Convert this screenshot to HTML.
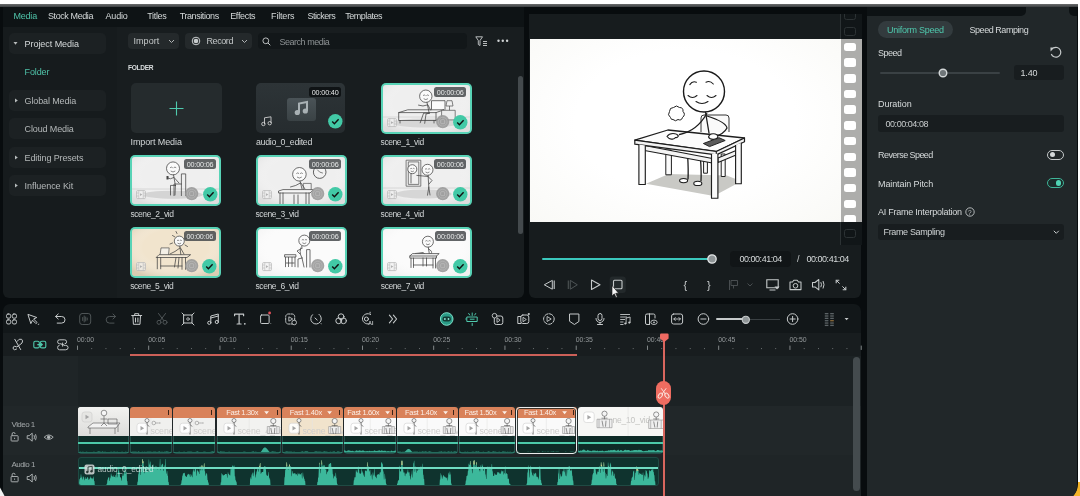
<!DOCTYPE html>
<html><head><meta charset="utf-8">
<style>
*{box-sizing:border-box;margin:0;padding:0}
body{width:1080px;height:496px;overflow:hidden;background:#fff;position:relative;font-family:"Liberation Sans",sans-serif;color:#d8dcdd}
.a{position:absolute}
.t{position:absolute;white-space:nowrap;font-size:9px;letter-spacing:-0.2px;line-height:10px}
svg{position:absolute;overflow:visible}
</style></head><body>

<div style="position:absolute;left:0;top:0;width:1080px;height:496px;will-change:transform;background:#fff;overflow:hidden">
<div class="a" style="left:1058px;top:482px;width:22px;height:14px;background:#f4b42a"></div>
<div class="a" style="left:0;top:3.7px;width:1078px;height:497.3px;background:#080c0e;border-radius:0 0 17px 0"></div>
<div class="a" style="left:0;top:3.7px;width:1078px;height:3.3px;background:linear-gradient(180deg,#6b6d6e,#3c3f41)"></div>
<div class="a" style="left:3px;top:7px;width:521px;height:19.7px;background:#0e1315"></div>
<div class="t" style="left:13.5px;top:11px;font-size:9px;letter-spacing:-0.22px;color:#4fc3a9;">Media</div>
<div class="t" style="left:48.0px;top:11px;font-size:9px;letter-spacing:-0.41px;color:#d4d8d9;">Stock Media</div>
<div class="t" style="left:105.5px;top:11px;font-size:9px;letter-spacing:-0.17px;color:#d4d8d9;">Audio</div>
<div class="t" style="left:147.3px;top:11px;font-size:9px;letter-spacing:-0.36px;color:#d4d8d9;">Titles</div>
<div class="t" style="left:179.7px;top:11px;font-size:9px;letter-spacing:-0.42px;color:#d4d8d9;">Transitions</div>
<div class="t" style="left:230.2px;top:11px;font-size:9px;letter-spacing:-0.32px;color:#d4d8d9;">Effects</div>
<div class="t" style="left:271.1px;top:11px;font-size:9px;letter-spacing:-0.18px;color:#d4d8d9;">Filters</div>
<div class="t" style="left:307.5px;top:11px;font-size:9px;letter-spacing:-0.55px;color:#d4d8d9;">Stickers</div>
<div class="t" style="left:345.2px;top:11px;font-size:9px;letter-spacing:-0.46px;color:#d4d8d9;">Templates</div>
<div class="a" style="left:3px;top:26.7px;width:114px;height:271.3px;background:#161b1d;border-radius:0 0 0 6px"></div>
<div class="a" style="left:9px;top:33px;width:97px;height:21px;background:#1c2123;border-radius:5px"></div>
<div class="a" style="left:9px;top:90px;width:97px;height:21px;background:#1c2123;border-radius:5px"></div>
<div class="a" style="left:9px;top:118px;width:97px;height:21px;background:#1c2123;border-radius:5px"></div>
<div class="a" style="left:9px;top:147px;width:97px;height:21px;background:#1c2123;border-radius:5px"></div>
<div class="a" style="left:9px;top:175px;width:97px;height:21px;background:#1c2123;border-radius:5px"></div>
<svg style="left:13px;top:41px" width="5" height="5"><path d="M0.5 1 L4.5 1 L2.5 3.8Z" fill="#b8bcbd"/></svg>
<svg style="left:14px;top:98px" width="5" height="5"><path d="M1 0.5 L1 4.5 L3.8 2.5Z" fill="#b8bcbd"/></svg>
<svg style="left:14px;top:155px" width="5" height="5"><path d="M1 0.5 L1 4.5 L3.8 2.5Z" fill="#b8bcbd"/></svg>
<svg style="left:14px;top:183px" width="5" height="5"><path d="M1 0.5 L1 4.5 L3.8 2.5Z" fill="#b8bcbd"/></svg>
<div class="t" style="left:24.6px;top:38.5px;font-size:9px;letter-spacing:-0.06px;color:#d6dadb;">Project Media</div>
<div class="t" style="left:24.6px;top:67px;font-size:9px;letter-spacing:-0.14px;color:#4fc3a9;">Folder</div>
<div class="t" style="left:24.6px;top:95.5px;font-size:9px;letter-spacing:-0.13px;color:#b4b8b9;">Global Media</div>
<div class="t" style="left:24.6px;top:124px;font-size:9px;letter-spacing:-0.13px;color:#b4b8b9;">Cloud Media</div>
<div class="t" style="left:24.6px;top:152.5px;font-size:9px;letter-spacing:-0.12px;color:#b4b8b9;">Editing Presets</div>
<div class="t" style="left:24.6px;top:181px;font-size:9px;letter-spacing:-0.07px;color:#b4b8b9;">Influence Kit</div>
<div class="a" style="left:117px;top:26.7px;width:407px;height:271.3px;background:#181d1f;border-radius:0 0 6px 0"></div>
<div class="a" style="left:128px;top:33px;width:51px;height:16px;background:#24292b;border-radius:4px"></div>
<div class="t" style="left:133.5px;top:36px;font-size:9px;letter-spacing:0.05px;color:#c4c8c9;">Import</div>
<svg style="left:167.5px;top:39px" width="8" height="5"><path d="M1 1 L3.5 3.5 L6 1" fill="none" stroke="#b0b4b5" stroke-width="1"/></svg>
<div class="a" style="left:185px;top:33px;width:67px;height:16px;background:#24292b;border-radius:4px"></div>
<svg style="left:191px;top:36px" width="10" height="10"><circle cx="5" cy="5" r="3.8" fill="none" stroke="#c8cccd" stroke-width="1"/><circle cx="5" cy="5" r="2.3" fill="#c8cccd"/></svg>
<div class="t" style="left:206.5px;top:36px;font-size:9px;letter-spacing:-0.42px;color:#c4c8c9;">Record</div>
<svg style="left:240.5px;top:39px" width="8" height="5"><path d="M1 1 L3.5 3.5 L6 1" fill="none" stroke="#b0b4b5" stroke-width="1"/></svg>
<div class="a" style="left:258px;top:33px;width:209px;height:16px;background:#121719;border-radius:4px"></div>
<svg style="left:262px;top:37px" width="9" height="9"><circle cx="3.8" cy="3.8" r="2.9" fill="none" stroke="#c8cccd" stroke-width="0.9"/><path d="M6 6 L8.3 8.3" stroke="#c8cccd" stroke-width="1"/></svg>
<div class="t" style="left:279.5px;top:36.5px;font-size:9px;letter-spacing:-0.48px;color:#8d9294;">Search media</div>
<svg style="left:475px;top:36px" width="14" height="11"><path d="M0.8 0.8 H7.5 L5 4.5 V9.5 L3.3 8.5 V4.5Z" fill="none" stroke="#c8cccd" stroke-width="0.9"/><path d="M8 5.5 H12 M8 7.5 H12 M8 9.5 H12" stroke="#c8cccd" stroke-width="0.9"/></svg>
<svg style="left:497px;top:39px" width="12" height="4"><circle cx="1.5" cy="1.8" r="1.2" fill="#d0d4d5"/><circle cx="5.8" cy="1.8" r="1.2" fill="#d0d4d5"/><circle cx="10.1" cy="1.8" r="1.2" fill="#d0d4d5"/></svg>
<div class="t" style="left:128px;top:62.5px;font-size:6.6px;letter-spacing:-0.3px;color:#d8dcdd;font-weight:bold">FOLDER</div>
<div class="a" style="left:517.5px;top:76px;width:5px;height:157.5px;background:#444a4d;border-radius:3px"></div>
<div class="a" style="left:529px;top:14px;width:332px;height:284px;background:#171c1e;border-radius:0 0 6px 6px"></div>
<div class="a" style="left:867px;top:7px;width:209.5px;height:494px;background:#212729;border-radius:0 0 15px 0"></div>
<div class="a" style="left:130.5px;top:82.6px;width:91px;height:50.5px;background:#252b2d;border-radius:5px"></div>
<svg style="left:168.5px;top:100.5px" width="15" height="15"><path d="M7.5 0.5 V14.5 M0.5 7.5 H14.5" stroke="#4fcaae" stroke-width="1.1"/></svg>
<div class="t" style="left:130.5px;top:136.5px;font-size:9px;letter-spacing:-0.1px;color:#d2d6d7">Import Media</div>
<div class="a" style="left:256px;top:83px;width:89px;height:50px;background:linear-gradient(180deg,#2d3437,#262c2f);border-radius:5px;overflow:hidden"><div class="a" style="left:31px;top:14.5px;width:28.5px;height:23px;background:linear-gradient(180deg,#4a5357,#3a4245);border-radius:3px"></div><svg style="left:37px;top:17px" width="17" height="17"><path d="M6 12.5 V3.5 L14 2 V11" fill="none" stroke="#a9b1b4" stroke-width="2"/><circle cx="4.3" cy="12.5" r="2.6" fill="#a9b1b4"/><circle cx="12.3" cy="11" r="2.6" fill="#a9b1b4"/></svg><svg style="left:4.5px;top:33px" width="12" height="10"><path d="M3.5 8 V1.8 L10 0.8 V7" fill="none" stroke="#e0e0e0" stroke-width="0.8"/><circle cx="2.4" cy="8" r="1.7" fill="none" stroke="#e0e0e0" stroke-width="0.8"/><circle cx="8.7" cy="7.2" r="1.7" fill="none" stroke="#e0e0e0" stroke-width="0.8"/></svg><svg style="left:71.5px;top:31.3px" width="15" height="15"><circle cx="7.3" cy="7.3" r="7.2" fill="#42c9a6"/><path d="M4.2 7.6 L6.4 9.8 L10.6 5.2" fill="none" stroke="#111" stroke-width="1.4"/></svg><div class="a" style="left:53.3px;top:4px;width:31.7px;height:9.5px;background:#0f1315;border-radius:2.5px"></div><div class="t" style="left:53.3px;top:4.5px;width:31.7px;text-align:center;font-size:7.2px;letter-spacing:-0.15px;line-height:9px;color:#e8eaea">00:00:40</div></div>
<div class="t" style="left:256px;top:136.5px;font-size:8.8px;letter-spacing:-0.3px;color:#d2d6d7">audio_0_edited</div>
<div class="a" style="left:380.6px;top:82.6px;width:91px;height:51px;border-radius:5px;background:#58d3b6;overflow:hidden"><div class="a" style="left:2px;top:2px;width:87px;height:47px;border-radius:3px;background:#efefef;overflow:hidden"><svg style="left:-2px;top:-2px" width="91" height="51" viewBox="0 0 91 51"><defs><radialGradient id="vg" cx="50%" cy="40%" r="65%"><stop offset="55%" stop-color="#fff" stop-opacity="0"/><stop offset="100%" stop-color="#cfcfcf" stop-opacity="0.55"/></radialGradient></defs><rect x="0" y="0" width="91" height="51" fill="url(#vg)"/><path d="M0 34 H91" stroke="#d8d8d8" stroke-width="1"/><ellipse cx="45" cy="40" rx="34" ry="4.5" fill="#d6d6d6"/><path d="M50.5 26.8 V17.7 H64 V26.8" fill="#fafafa" stroke="#404040" stroke-width="0.75"/><path d="M17.7 29.6 L26.8 26.8 H62.9 L55 29.6 Z" fill="#f4f4f4" stroke="#404040" stroke-width="0.75"/><path d="M17.7 29.6 V37.5 H55 V29.6 M55 37.5 L62.9 33 V26.8" fill="none" stroke="#404040" stroke-width="0.75" stroke-linecap="round" stroke-linejoin="round"/><path d="M19 37.5 V40 M53 37.5 V40" fill="none" stroke="#404040" stroke-width="0.75" stroke-linecap="round" stroke-linejoin="round"/><path d="M60.6 27.3 H74.2 V36.9 H60.6z" fill="#ececec" stroke="#505050" stroke-width="0.7"/><path d="M66 17.7 H71 L72 23 H65z M68.5 23 V27.3" fill="#f0f0f0" stroke="#505050" stroke-width="0.7"/><circle cx="44.8" cy="13.2" r="6.2" fill="#fafafa" stroke="#404040" stroke-width="0.75"/><path d="M42.01 12.579999999999998 q1.2400000000000002 -1.2400000000000002 2.4800000000000004 0 M45.419999999999995 12.579999999999998 q1.2400000000000002 -1.2400000000000002 2.4800000000000004 0 M42.629999999999995 15.68 q2.17 1.8599999999999999 4.34 0" fill="none" stroke="#404040" stroke-width="0.6"/><path d="M46 19.4 L48.2 30.2 M46.5 22 Q42 24 37.5 22.2 M47 22 L49.5 27" fill="none" stroke="#404040" stroke-width="0.75" stroke-linecap="round" stroke-linejoin="round"/><path d="M48.2 30.2 L42.6 30.2 L39.2 39.8 M48.2 30.2 L45 31 L43.7 40.3" fill="none" stroke="#404040" stroke-width="0.75" stroke-linecap="round" stroke-linejoin="round"/></svg></div><svg style="left:6px;top:35px" width="10" height="9"><rect x="0.6" y="0.6" width="8.8" height="8" rx="1" fill="#f2f2f2" fill-opacity="0.6" stroke="#b9b9b9" stroke-width="0.8"/><path d="M2.8 0.6 V8.6 M7.2 0.6 V8.6 M0.6 3 H2.8 M0.6 6 H2.8 M7.2 3 H9.4 M7.2 6 H9.4" stroke="#b9b9b9" stroke-width="0.6"/><path d="M4 3.2 L6.3 4.6 L4 6z" fill="#b0b0b0"/></svg><svg style="left:55px;top:32.5px" width="14" height="14"><circle cx="6.7" cy="6.7" r="6.6" fill="#9a9a9a" fill-opacity="0.9"/><circle cx="6.7" cy="6.7" r="4.4" fill="none" stroke="#b8b8b8" stroke-width="0.7"/><rect x="4.7" y="4.7" width="4" height="4" rx="0.8" fill="none" stroke="#c0c0c0" stroke-width="0.7"/></svg><svg style="left:72.3px;top:32px" width="15" height="15"><circle cx="7.3" cy="7.3" r="7.2" fill="#42c9a6"/><path d="M4.2 7.6 L6.4 9.8 L10.6 5.2" fill="none" stroke="#111" stroke-width="1.4"/></svg><div class="a" style="left:53.8px;top:4.6px;width:31.7px;height:9.5px;background:rgba(70,74,76,0.85);border-radius:2.5px"></div><div class="t" style="left:53.8px;top:5.1px;width:31.7px;text-align:center;font-size:7.2px;letter-spacing:-0.15px;line-height:9px;color:#e8eaea">00:00:06</div></div><div class="t" style="left:380.6px;top:136.6px;font-size:8.5px;letter-spacing:-0.42px;color:#d2d6d7">scene_1_vid</div>
<div class="a" style="left:130.4px;top:154.7px;width:91px;height:51px;border-radius:5px;background:#58d3b6;overflow:hidden"><div class="a" style="left:2px;top:2px;width:87px;height:47px;border-radius:3px;background:#efefef;overflow:hidden"><svg style="left:-2px;top:-2px" width="91" height="51" viewBox="0 0 91 51"><defs><radialGradient id="vg" cx="50%" cy="40%" r="65%"><stop offset="55%" stop-color="#fff" stop-opacity="0"/><stop offset="100%" stop-color="#cfcfcf" stop-opacity="0.55"/></radialGradient></defs><rect x="0" y="0" width="91" height="51" fill="url(#vg)"/><path d="M0 34 H91" stroke="#d6d6d6" stroke-width="1"/><ellipse cx="43" cy="39.7" rx="30" ry="4" fill="#d4d4d4"/><path d="M51.4 40.6 V18.9 H55.7 V40.6 M51.4 29 H44 V40.6" fill="none" stroke="#404040" stroke-width="0.75" stroke-linecap="round" stroke-linejoin="round"/><circle cx="43" cy="13.4" r="6.5" fill="#fafafa" stroke="#404040" stroke-width="0.75"/><path d="M40.075 12.75 q1.3 -1.3 2.6 0 M43.65 12.75 q1.3 -1.3 2.6 0 M40.725 16.0 q2.275 1.95 4.55 0" fill="none" stroke="#404040" stroke-width="0.6"/><path d="M43.5 19.9 L45.4 30.4 M44 22.5 Q40 25 37.5 23.1 M44.5 23 L49 28" fill="none" stroke="#404040" stroke-width="0.75" stroke-linecap="round" stroke-linejoin="round"/><path d="M36.5 21 h2 v3.5 h-2z" fill="#444"/><path d="M45.4 30.4 L40.5 30.4 V40 M45.4 30.4 L45 40" fill="none" stroke="#404040" stroke-width="0.75" stroke-linecap="round" stroke-linejoin="round"/></svg></div><svg style="left:6px;top:35px" width="10" height="9"><rect x="0.6" y="0.6" width="8.8" height="8" rx="1" fill="#f2f2f2" fill-opacity="0.6" stroke="#b9b9b9" stroke-width="0.8"/><path d="M2.8 0.6 V8.6 M7.2 0.6 V8.6 M0.6 3 H2.8 M0.6 6 H2.8 M7.2 3 H9.4 M7.2 6 H9.4" stroke="#b9b9b9" stroke-width="0.6"/><path d="M4 3.2 L6.3 4.6 L4 6z" fill="#b0b0b0"/></svg><svg style="left:55px;top:32.5px" width="14" height="14"><circle cx="6.7" cy="6.7" r="6.6" fill="#9a9a9a" fill-opacity="0.9"/><circle cx="6.7" cy="6.7" r="4.4" fill="none" stroke="#b8b8b8" stroke-width="0.7"/><rect x="4.7" y="4.7" width="4" height="4" rx="0.8" fill="none" stroke="#c0c0c0" stroke-width="0.7"/></svg><svg style="left:72.3px;top:32px" width="15" height="15"><circle cx="7.3" cy="7.3" r="7.2" fill="#42c9a6"/><path d="M4.2 7.6 L6.4 9.8 L10.6 5.2" fill="none" stroke="#111" stroke-width="1.4"/></svg><div class="a" style="left:53.8px;top:4.6px;width:31.7px;height:9.5px;background:rgba(70,74,76,0.85);border-radius:2.5px"></div><div class="t" style="left:53.8px;top:5.1px;width:31.7px;text-align:center;font-size:7.2px;letter-spacing:-0.15px;line-height:9px;color:#e8eaea">00:00:06</div></div><div class="t" style="left:130.4px;top:208.7px;font-size:8.5px;letter-spacing:-0.42px;color:#d2d6d7">scene_2_vid</div>
<div class="a" style="left:255.5px;top:154.7px;width:91px;height:51px;border-radius:5px;background:#58d3b6;overflow:hidden"><div class="a" style="left:2px;top:2px;width:87px;height:47px;border-radius:3px;background:#efefef;overflow:hidden"><svg style="left:-2px;top:-2px" width="91" height="51" viewBox="0 0 91 51"><defs><radialGradient id="vg" cx="50%" cy="40%" r="65%"><stop offset="55%" stop-color="#fff" stop-opacity="0"/><stop offset="100%" stop-color="#cfcfcf" stop-opacity="0.55"/></radialGradient></defs><rect x="0" y="0" width="91" height="51" fill="url(#vg)"/><circle cx="63.7" cy="17.1" r="6.3" fill="#f2f2f2" stroke="#505050" stroke-width="0.9"/><path d="M63.7 17.1 l-2.5 -2.5 M63.7 17.1 l3.2 1" stroke="#505050" stroke-width="0.7"/><path d="M47.3 35 V28.4 H55.2 V35" fill="#f0f0f0" stroke="#505050" stroke-width="0.7"/><circle cx="43.4" cy="19.3" r="6.8" fill="#fafafa" stroke="#404040" stroke-width="0.75"/><path d="M40.339999999999996 18.62 q1.36 -1.36 2.72 0 M44.08 18.62 q1.36 -1.36 2.72 0 M41.019999999999996 22.02 q2.38 2.04 4.76 0" fill="none" stroke="#404040" stroke-width="0.6"/><path d="M44 26 L46 34 M44.5 28 Q40 31 34.5 32 M45 28 L49 34" fill="none" stroke="#404040" stroke-width="0.75" stroke-linecap="round" stroke-linejoin="round"/><path d="M22.5 36 L27 34.6 H57.5 L54 38 H22.5z" fill="#f6f6f6" stroke="#404040" stroke-width="0.75"/><path d="M24 38 V51 M27 38 V51 M50 38 V51 M53 38 V51 M38 40 V51 M42 40 V51" fill="none" stroke="#404040" stroke-width="0.75" stroke-linecap="round" stroke-linejoin="round"/></svg></div><svg style="left:6px;top:35px" width="10" height="9"><rect x="0.6" y="0.6" width="8.8" height="8" rx="1" fill="#f2f2f2" fill-opacity="0.6" stroke="#b9b9b9" stroke-width="0.8"/><path d="M2.8 0.6 V8.6 M7.2 0.6 V8.6 M0.6 3 H2.8 M0.6 6 H2.8 M7.2 3 H9.4 M7.2 6 H9.4" stroke="#b9b9b9" stroke-width="0.6"/><path d="M4 3.2 L6.3 4.6 L4 6z" fill="#b0b0b0"/></svg><svg style="left:55px;top:32.5px" width="14" height="14"><circle cx="6.7" cy="6.7" r="6.6" fill="#9a9a9a" fill-opacity="0.9"/><circle cx="6.7" cy="6.7" r="4.4" fill="none" stroke="#b8b8b8" stroke-width="0.7"/><rect x="4.7" y="4.7" width="4" height="4" rx="0.8" fill="none" stroke="#c0c0c0" stroke-width="0.7"/></svg><svg style="left:72.3px;top:32px" width="15" height="15"><circle cx="7.3" cy="7.3" r="7.2" fill="#42c9a6"/><path d="M4.2 7.6 L6.4 9.8 L10.6 5.2" fill="none" stroke="#111" stroke-width="1.4"/></svg><div class="a" style="left:53.8px;top:4.6px;width:31.7px;height:9.5px;background:rgba(70,74,76,0.85);border-radius:2.5px"></div><div class="t" style="left:53.8px;top:5.1px;width:31.7px;text-align:center;font-size:7.2px;letter-spacing:-0.15px;line-height:9px;color:#e8eaea">00:00:06</div></div><div class="t" style="left:255.5px;top:208.7px;font-size:8.5px;letter-spacing:-0.42px;color:#d2d6d7">scene_3_vid</div>
<div class="a" style="left:380.6px;top:154.7px;width:91px;height:51px;border-radius:5px;background:#58d3b6;overflow:hidden"><div class="a" style="left:2px;top:2px;width:87px;height:47px;border-radius:3px;background:#efefef;overflow:hidden"><svg style="left:-2px;top:-2px" width="91" height="51" viewBox="0 0 91 51"><defs><radialGradient id="vg" cx="50%" cy="40%" r="65%"><stop offset="55%" stop-color="#fff" stop-opacity="0"/><stop offset="100%" stop-color="#cfcfcf" stop-opacity="0.55"/></radialGradient></defs><rect x="0" y="0" width="91" height="51" fill="url(#vg)"/><path d="M0 33 H91" stroke="#d6d6d6" stroke-width="1"/><ellipse cx="42.6" cy="39" rx="28" ry="4.5" fill="#d6d6d6"/><path d="M25.1 5.2 H39.8 V31.2 H25.1z M27.3 6.9 H37.8 V29.4 H27.3z" fill="#f0f0f0" stroke="#555" stroke-width="0.75"/><circle cx="31.3" cy="14.2" r="4.5" fill="#fafafa" stroke="#404040" stroke-width="0.75"/><path d="M29.275000000000002 13.75 q0.9 -0.9 1.8 0 M31.75 13.75 q0.9 -0.9 1.8 0 M29.725 16.0 q1.575 1.3499999999999999 3.15 0" fill="none" stroke="#404040" stroke-width="0.6"/><path d="M30 18.7 V28" fill="none" stroke="#404040" stroke-width="0.75" stroke-linecap="round" stroke-linejoin="round"/><circle cx="46.5" cy="14.8" r="5.5" fill="#fafafa" stroke="#404040" stroke-width="0.75"/><path d="M44.025 14.25 q1.1 -1.1 2.2 0 M47.05 14.25 q1.1 -1.1 2.2 0 M44.575 17.0 q1.9249999999999998 1.65 3.8499999999999996 0" fill="none" stroke="#404040" stroke-width="0.6"/><path d="M47.1 20.3 L47.8 32 L46.5 40.2 M47.8 32 L49 40 M47.1 21.5 L35.8 20.4 M47.5 22 L51 25.5 L48 29" fill="none" stroke="#404040" stroke-width="0.75" stroke-linecap="round" stroke-linejoin="round"/></svg></div><svg style="left:6px;top:35px" width="10" height="9"><rect x="0.6" y="0.6" width="8.8" height="8" rx="1" fill="#f2f2f2" fill-opacity="0.6" stroke="#b9b9b9" stroke-width="0.8"/><path d="M2.8 0.6 V8.6 M7.2 0.6 V8.6 M0.6 3 H2.8 M0.6 6 H2.8 M7.2 3 H9.4 M7.2 6 H9.4" stroke="#b9b9b9" stroke-width="0.6"/><path d="M4 3.2 L6.3 4.6 L4 6z" fill="#b0b0b0"/></svg><svg style="left:55px;top:32.5px" width="14" height="14"><circle cx="6.7" cy="6.7" r="6.6" fill="#9a9a9a" fill-opacity="0.9"/><circle cx="6.7" cy="6.7" r="4.4" fill="none" stroke="#b8b8b8" stroke-width="0.7"/><rect x="4.7" y="4.7" width="4" height="4" rx="0.8" fill="none" stroke="#c0c0c0" stroke-width="0.7"/></svg><svg style="left:72.3px;top:32px" width="15" height="15"><circle cx="7.3" cy="7.3" r="7.2" fill="#42c9a6"/><path d="M4.2 7.6 L6.4 9.8 L10.6 5.2" fill="none" stroke="#111" stroke-width="1.4"/></svg><div class="a" style="left:53.8px;top:4.6px;width:31.7px;height:9.5px;background:rgba(70,74,76,0.85);border-radius:2.5px"></div><div class="t" style="left:53.8px;top:5.1px;width:31.7px;text-align:center;font-size:7.2px;letter-spacing:-0.15px;line-height:9px;color:#e8eaea">00:00:06</div></div><div class="t" style="left:380.6px;top:208.7px;font-size:8.5px;letter-spacing:-0.42px;color:#d2d6d7">scene_4_vid</div>
<div class="a" style="left:130.2px;top:226.8px;width:91px;height:51px;border-radius:5px;background:#58d3b6;overflow:hidden"><div class="a" style="left:2px;top:2px;width:87px;height:47px;border-radius:3px;background:#f1e4cd;overflow:hidden"><svg style="left:-2px;top:-2px" width="91" height="51" viewBox="0 0 91 51"><defs><radialGradient id="vg5" cx="50%" cy="40%" r="65%"><stop offset="55%" stop-color="#fff" stop-opacity="0"/><stop offset="100%" stop-color="#c9b99c" stop-opacity="0.55"/></radialGradient></defs><rect x="0" y="0" width="91" height="51" fill="url(#vg5)"/><path d="M45 10 l-2.5 -1.5 M47 6.5 l-1 -2 M42.5 16 l-2.5 1 M55 12 l2.5 -1 M55 18 l2.5 1.5" fill="none" stroke="#404040" stroke-width="0.75" stroke-linecap="round" stroke-linejoin="round"/><path d="M30.1 27.7 L31 20.9 H39.2 L38.5 27.7" fill="#f3efe6" stroke="#505050" stroke-width="0.7"/><circle cx="49.3" cy="14.1" r="5" fill="#fafafa" stroke="#404040" stroke-width="0.75"/><path d="M47.05 13.6 q1.0 -1.0 2.0 0 M49.8 13.6 q1.0 -1.0 2.0 0 M47.55 16.1 q1.75 1.5 3.5 0" fill="none" stroke="#404040" stroke-width="0.6"/><path d="M49.8 19.1 L51 29 M50 21 Q45 25 40 27 M50.5 21 L54 27" fill="none" stroke="#404040" stroke-width="0.75" stroke-linecap="round" stroke-linejoin="round"/><path d="M26.2 30.5 L29 27.7 H60.6 L57 30.5z" fill="#f6ecda" stroke="#404040" stroke-width="0.75"/><path d="M27.3 30.5 V41.8 M30.7 30.5 V41.8 M52 30.5 V42.3 M55.5 30.5 V42.3 M30.7 39 H52 M46 30.5 L44.5 40 M49 30.5 L48 41" fill="none" stroke="#404040" stroke-width="0.75" stroke-linecap="round" stroke-linejoin="round"/></svg></div><svg style="left:6px;top:35px" width="10" height="9"><rect x="0.6" y="0.6" width="8.8" height="8" rx="1" fill="#f2f2f2" fill-opacity="0.6" stroke="#b9b9b9" stroke-width="0.8"/><path d="M2.8 0.6 V8.6 M7.2 0.6 V8.6 M0.6 3 H2.8 M0.6 6 H2.8 M7.2 3 H9.4 M7.2 6 H9.4" stroke="#b9b9b9" stroke-width="0.6"/><path d="M4 3.2 L6.3 4.6 L4 6z" fill="#b0b0b0"/></svg><svg style="left:55px;top:32.5px" width="14" height="14"><circle cx="6.7" cy="6.7" r="6.6" fill="#9a9a9a" fill-opacity="0.9"/><circle cx="6.7" cy="6.7" r="4.4" fill="none" stroke="#b8b8b8" stroke-width="0.7"/><rect x="4.7" y="4.7" width="4" height="4" rx="0.8" fill="none" stroke="#c0c0c0" stroke-width="0.7"/></svg><svg style="left:72.3px;top:32px" width="15" height="15"><circle cx="7.3" cy="7.3" r="7.2" fill="#42c9a6"/><path d="M4.2 7.6 L6.4 9.8 L10.6 5.2" fill="none" stroke="#111" stroke-width="1.4"/></svg><div class="a" style="left:53.8px;top:4.6px;width:31.7px;height:9.5px;background:rgba(70,74,76,0.85);border-radius:2.5px"></div><div class="t" style="left:53.8px;top:5.1px;width:31.7px;text-align:center;font-size:7.2px;letter-spacing:-0.15px;line-height:9px;color:#e8eaea">00:00:06</div></div><div class="t" style="left:130.2px;top:280.8px;font-size:8.5px;letter-spacing:-0.42px;color:#d2d6d7">scene_5_vid</div>
<div class="a" style="left:255.5px;top:226.8px;width:91px;height:51px;border-radius:5px;background:#58d3b6;overflow:hidden"><div class="a" style="left:2px;top:2px;width:87px;height:47px;border-radius:3px;background:#fbfbfb;overflow:hidden"><svg style="left:-2px;top:-2px" width="91" height="51" viewBox="0 0 91 51"><defs><radialGradient id="vg6" cx="50%" cy="40%" r="65%"><stop offset="55%" stop-color="#fff" stop-opacity="0"/><stop offset="100%" stop-color="#cfcfcf" stop-opacity="0.25"/></radialGradient></defs><rect x="0" y="0" width="91" height="51" fill="url(#vg6)"/><path d="M50.6 40.1 V22.6 H54 V40.1" fill="none" stroke="#404040" stroke-width="0.75" stroke-linecap="round" stroke-linejoin="round"/><path d="M28.6 27.7 H39.9 V30 H28.6z M29.5 30 V40.1 M39 30 V40.1 M30 36 H38.5 M32.5 30 V40 M36 30 V40" fill="#f6f6f6" stroke="#404040" stroke-width="0.75"/><circle cx="48.3" cy="13.6" r="5.5" fill="#fafafa" stroke="#404040" stroke-width="0.75"/><path d="M45.824999999999996 13.049999999999999 q1.1 -1.1 2.2 0 M48.849999999999994 13.049999999999999 q1.1 -1.1 2.2 0 M46.375 15.8 q1.9249999999999998 1.65 3.8499999999999996 0" fill="none" stroke="#404040" stroke-width="0.6"/><path d="M46 19 Q42 24 46 31 M46.5 21 L41 24 L44 27 M46 31 L42 32 L42 40 M46 31 L48 40" fill="none" stroke="#404040" stroke-width="0.75" stroke-linecap="round" stroke-linejoin="round"/></svg></div><svg style="left:6px;top:35px" width="10" height="9"><rect x="0.6" y="0.6" width="8.8" height="8" rx="1" fill="#f2f2f2" fill-opacity="0.6" stroke="#b9b9b9" stroke-width="0.8"/><path d="M2.8 0.6 V8.6 M7.2 0.6 V8.6 M0.6 3 H2.8 M0.6 6 H2.8 M7.2 3 H9.4 M7.2 6 H9.4" stroke="#b9b9b9" stroke-width="0.6"/><path d="M4 3.2 L6.3 4.6 L4 6z" fill="#b0b0b0"/></svg><svg style="left:55px;top:32.5px" width="14" height="14"><circle cx="6.7" cy="6.7" r="6.6" fill="#9a9a9a" fill-opacity="0.9"/><circle cx="6.7" cy="6.7" r="4.4" fill="none" stroke="#b8b8b8" stroke-width="0.7"/><rect x="4.7" y="4.7" width="4" height="4" rx="0.8" fill="none" stroke="#c0c0c0" stroke-width="0.7"/></svg><svg style="left:72.3px;top:32px" width="15" height="15"><circle cx="7.3" cy="7.3" r="7.2" fill="#42c9a6"/><path d="M4.2 7.6 L6.4 9.8 L10.6 5.2" fill="none" stroke="#111" stroke-width="1.4"/></svg><div class="a" style="left:53.8px;top:4.6px;width:31.7px;height:9.5px;background:rgba(70,74,76,0.85);border-radius:2.5px"></div><div class="t" style="left:53.8px;top:5.1px;width:31.7px;text-align:center;font-size:7.2px;letter-spacing:-0.15px;line-height:9px;color:#e8eaea">00:00:06</div></div><div class="t" style="left:255.5px;top:280.8px;font-size:8.5px;letter-spacing:-0.42px;color:#d2d6d7">scene_6_vid</div>
<div class="a" style="left:380.8px;top:226.8px;width:91px;height:51px;border-radius:5px;background:#58d3b6;overflow:hidden"><div class="a" style="left:2px;top:2px;width:87px;height:47px;border-radius:3px;background:#fbfbfb;overflow:hidden"><svg style="left:-2px;top:-2px" width="91" height="51" viewBox="0 0 91 51"><defs><radialGradient id="vg7" cx="50%" cy="40%" r="65%"><stop offset="55%" stop-color="#fff" stop-opacity="0"/><stop offset="100%" stop-color="#cfcfcf" stop-opacity="0.25"/></radialGradient></defs><rect x="0" y="0" width="91" height="51" fill="url(#vg7)"/><circle cx="46.9" cy="14.7" r="5.5" fill="#fafafa" stroke="#404040" stroke-width="0.75"/><path d="M44.425 14.149999999999999 q1.1 -1.1 2.2 0 M47.449999999999996 14.149999999999999 q1.1 -1.1 2.2 0 M44.975 16.9 q1.9249999999999998 1.65 3.8499999999999996 0" fill="none" stroke="#404040" stroke-width="0.6"/><path d="M47.3 20.2 L48.5 28 M47.5 22 Q52 24 50 27 L45 27.5" fill="none" stroke="#404040" stroke-width="0.75" stroke-linecap="round" stroke-linejoin="round"/><path d="M34 26.5 L42 25.5 L44 27 L36 28z" fill="#888" stroke="#404040" stroke-width="0.6"/><path d="M28.8 29 L31.5 26.6 H58.2 L55.5 29z" fill="#f6f6f6" stroke="#404040" stroke-width="0.75"/><path d="M28.8 29 V31.1 H55.5 V29 M30 31.1 V40.5 M32.5 31.1 V40.5 M52 31.1 V41 M54.5 31.1 V41 M32.5 38 H52 M42 31 V39 M45.5 31 V39" fill="none" stroke="#404040" stroke-width="0.75" stroke-linecap="round" stroke-linejoin="round"/></svg></div><svg style="left:6px;top:35px" width="10" height="9"><rect x="0.6" y="0.6" width="8.8" height="8" rx="1" fill="#f2f2f2" fill-opacity="0.6" stroke="#b9b9b9" stroke-width="0.8"/><path d="M2.8 0.6 V8.6 M7.2 0.6 V8.6 M0.6 3 H2.8 M0.6 6 H2.8 M7.2 3 H9.4 M7.2 6 H9.4" stroke="#b9b9b9" stroke-width="0.6"/><path d="M4 3.2 L6.3 4.6 L4 6z" fill="#b0b0b0"/></svg><svg style="left:55px;top:32.5px" width="14" height="14"><circle cx="6.7" cy="6.7" r="6.6" fill="#9a9a9a" fill-opacity="0.9"/><circle cx="6.7" cy="6.7" r="4.4" fill="none" stroke="#b8b8b8" stroke-width="0.7"/><rect x="4.7" y="4.7" width="4" height="4" rx="0.8" fill="none" stroke="#c0c0c0" stroke-width="0.7"/></svg><svg style="left:72.3px;top:32px" width="15" height="15"><circle cx="7.3" cy="7.3" r="7.2" fill="#42c9a6"/><path d="M4.2 7.6 L6.4 9.8 L10.6 5.2" fill="none" stroke="#111" stroke-width="1.4"/></svg><div class="a" style="left:53.8px;top:4.6px;width:31.7px;height:9.5px;background:rgba(70,74,76,0.85);border-radius:2.5px"></div><div class="t" style="left:53.8px;top:5.1px;width:31.7px;text-align:center;font-size:7.2px;letter-spacing:-0.15px;line-height:9px;color:#e8eaea">00:00:06</div></div><div class="t" style="left:380.8px;top:280.8px;font-size:8.5px;letter-spacing:-0.42px;color:#d2d6d7">scene_7_vid</div>
<div class="a" style="left:529.5px;top:38.5px;width:311px;height:183.2px;background:radial-gradient(ellipse at 50% 45%,#ffffff 50%,#f9f9f6 100%)"></div>
<svg style="left:0;top:0" width="1080" height="496"><path d="M646 183.7 L668.7 174 L726.8 175.6 L741.3 181.3 L713.9 196 Z" fill="#c9c9c5"/><path d="M670.5 117.5 q-3.5 -2.5 -1 -6 q0 -4 4 -4 q3 -3 6 0 q4 0 3.5 4 q3 3 -0.5 6 q-1 3.5 -4.5 2 q-2.5 2.5 -5 0 q-2 0.5 -2.5 -2z" fill="#fff" stroke="#222" stroke-width="1"/><path d="M701 132 V118 q0 -3 3 -3 H726 q3 0 3 3 V132" fill="#fafafa" stroke="#333" stroke-width="1"/><path d="M665.8 150 h5.6 v24.8 h-5.6z M721.2 154 h4 v22.5 h-4z M703.6 158 h3.8 v15.2 h-3.8z" fill="#fbfbfb" stroke="#1e1e1e" stroke-width="1"/><path d="M687.7 157 Q688.5 170 688 179.5 M700.5 159 Q701.5 172 701 181.3" fill="none" stroke="#1e1e1e" stroke-width="1.3"/><ellipse cx="683.6" cy="180.6" rx="4" ry="2.1" fill="#fff" stroke="#1e1e1e" stroke-width="1.1"/><ellipse cx="697.8" cy="183.4" rx="4" ry="2.1" fill="#fff" stroke="#1e1e1e" stroke-width="1.1"/><path d="M644.5 145.5 L712.3 158.5 V163 L644.5 150.5 Z M718 158 L739.7 149 V153.5 L718 162.5 Z" fill="#f4f4f4" stroke="#1e1e1e" stroke-width="1.1" stroke-linejoin="round"/><path d="M634.8 140.2 L667.9 130 L744.5 138 L716.3 151.5 Z" fill="#fcfcfc" stroke="#1e1e1e" stroke-width="1.3" stroke-linejoin="round"/><path d="M634.8 140.2 V144.2 L716.3 154.9 L744.5 141.8 V138 L716.3 151.5 Z M716.3 151.5 V154.9" fill="#f3f3f3" stroke="#1e1e1e" stroke-width="1.2" stroke-linejoin="round"/><path d="M638.9 144.6 V184.5 h6.4 V145.5 M711.5 154 V198.2 h6.4 V153.8 M735.6 145 V183.7 h5.7 V142.8" fill="#fbfbfb" stroke="#1e1e1e" stroke-width="1.15" stroke-linejoin="round"/><path d="M705.5 112 L709 133" stroke="#1e1e1e" fill="none" stroke-width="1.3" stroke-linecap="round" stroke-linejoin="round"/><path d="M706.8 113.5 Q697 131 679.5 134.5 M707 116 Q726 122 727 128 Q724 134 714 137" stroke="#1e1e1e" fill="none" stroke-width="1.3" stroke-linecap="round" stroke-linejoin="round"/><path d="M703.4 143.5 L719 137.7 L725.2 140.5 L709.5 146.6 Z" fill="#5a5a5a" stroke="#222" stroke-width="1"/><path d="M667 136.5 q2 -3 6 -3 q4 0 5.4 2.5 q-1 2 -3 1.6 q-1 1.8 -3.5 1.5 q-2.5 0.5 -4.9 -2.6z" fill="#fff" stroke="#1e1e1e" stroke-width="1.1"/><path d="M708.5 137 q1 -3.5 5 -3.3 q4 0.3 4.4 3 q-0.5 2.5 -4.4 2.7 q-3.8 0.2 -5 -2.4z" fill="#fff" stroke="#1e1e1e" stroke-width="1.1"/><circle cx="704" cy="91.5" r="20.5" fill="#fff" stroke="#1a1a1a" stroke-width="1.4"/><path d="M688 95.5 q4.5 4 9 0 M707 95.5 q4.5 4 9 0 M689.8 84.6 q2.5 -4 6.6 -2.4 M706 82.2 q4 -2 7.3 1.8 M696 101.5 q6 4 12 0" fill="none" stroke="#1a1a1a" stroke-width="1.1" stroke-linecap="round"/></svg>
<div class="a" style="left:840.5px;top:38.5px;width:21px;height:183.3px;background:#adadab;overflow:hidden"><div class="a" style="left:3.3px;top:4.1px;width:12px;height:8.5px;background:#fff;border-radius:2.5px"></div><div class="a" style="left:3.3px;top:19.8px;width:12px;height:8.5px;background:#fff;border-radius:2.5px"></div><div class="a" style="left:3.3px;top:35.5px;width:12px;height:8.5px;background:#fff;border-radius:2.5px"></div><div class="a" style="left:3.3px;top:51.2px;width:12px;height:8.5px;background:#fff;border-radius:2.5px"></div><div class="a" style="left:3.3px;top:66.9px;width:12px;height:8.5px;background:#fff;border-radius:2.5px"></div><div class="a" style="left:3.3px;top:82.6px;width:12px;height:8.5px;background:#fff;border-radius:2.5px"></div><div class="a" style="left:3.3px;top:98.3px;width:12px;height:8.5px;background:#fff;border-radius:2.5px"></div><div class="a" style="left:3.3px;top:114.0px;width:12px;height:8.5px;background:#fff;border-radius:2.5px"></div><div class="a" style="left:3.3px;top:129.7px;width:12px;height:8.5px;background:#fff;border-radius:2.5px"></div><div class="a" style="left:3.3px;top:145.4px;width:12px;height:8.5px;background:#fff;border-radius:2.5px"></div><div class="a" style="left:3.3px;top:161.1px;width:12px;height:8.5px;background:#fff;border-radius:2.5px"></div><div class="a" style="left:3.3px;top:176.8px;width:12px;height:8.5px;background:#fff;border-radius:2.5px"></div></div>
<div class="a" style="left:840.3px;top:14px;width:1px;height:24.5px;background:#2c3234"></div>
<div class="a" style="left:840.3px;top:221.8px;width:1px;height:23.5px;background:#2c3234"></div>
<div class="a" style="left:841px;top:14px;width:20.5px;height:24.5px;background:#111618;overflow:hidden"><div class="a" style="left:2.8px;top:-2.8px;width:12px;height:8.5px;border:1px solid #2c3234;border-radius:2.5px"></div><div class="a" style="left:2.8px;top:13px;width:12px;height:8.5px;border:1px solid #2c3234;border-radius:2.5px;background:#101517"></div></div>
<div class="a" style="left:841px;top:221.8px;width:20.5px;height:23px;background:#111618;overflow:hidden"><div class="a" style="left:2.8px;top:7.7px;width:12px;height:8.5px;border:1px solid #2c3234;border-radius:2.5px;background:#101517"></div></div>
<div class="a" style="left:542px;top:257.8px;width:170px;height:2.6px;background:#3bc8bd;border-radius:1.5px"></div>
<svg style="left:707px;top:254px" width="10" height="10"><circle cx="5" cy="5" r="4.2" fill="#8f9597" stroke="#e3e6e7" stroke-width="1.3"/></svg>
<div class="a" style="left:730px;top:251px;width:61px;height:16.3px;background:#111517;border-radius:4px"></div>
<div class="t" style="left:739.5px;top:254px;font-size:9px;letter-spacing:-0.48px;color:#d6dadb">00:00:41:04</div>
<div class="t" style="left:797px;top:254px;font-size:9px;color:#c8cccd">/</div>
<div class="t" style="left:806.5px;top:254px;font-size:9px;letter-spacing:-0.48px;color:#d6dadb">00:00:41:04</div>
<svg style="left:0;top:0" width="1080" height="496"><path d="M552.3 280.4 L544.3 284.8 L552.3 289.2 Z" fill="none" stroke="#c6cacb" stroke-width="1" stroke-linejoin="round"/><path d="M554.2 280.6 V289" stroke="#c6cacb" stroke-width="1.1"/><path d="M568.3 280.6 V289" stroke="#4e5456" stroke-width="1.1"/><path d="M570.3 280.4 L577.3 284.8 L570.3 289.2 Z" fill="none" stroke="#4e5456" stroke-width="1" stroke-linejoin="round"/><path d="M591.5 280 L600 284.7 L591.5 289.4 Z" fill="none" stroke="#c6cacb" stroke-width="1.1" stroke-linejoin="round"/><rect x="609.7" y="276.6" width="16.1" height="16.4" rx="3" fill="#23292b"/><rect x="613.5" y="280.3" width="8.5" height="8.5" rx="1" fill="none" stroke="#c6cacb" stroke-width="1.1"/><path d="M612 285.5 V296 L614.3 293.8 L616 297.5 L617.3 297 L615.7 293.3 L618.6 293.2 Z" fill="#f5f5f5" stroke="#111" stroke-width="0.6"/><text x="683.5" y="289" font-size="11" fill="#c6cacb" font-family="Liberation Sans">{</text><text x="707" y="289" font-size="11" fill="#c6cacb" font-family="Liberation Sans">}</text><path d="M729.5 280 V290 M731 280.5 h6.5 v5 h-6.5z M733.5 285.5 v3" fill="none" stroke="#4e5456" stroke-width="0.9"/><path d="M747.5 283.5 l2.5 2.5 l2.5 -2.5" fill="none" stroke="#4e5456" stroke-width="0.9"/><path d="M766.8 279.8 h11.4 v8 h-11.4z M769.5 290 h6" fill="none" stroke="#c6cacb" stroke-width="1.1"/><path d="M774.5 286.5 h5 l-2.5 3z" fill="#c6cacb"/><path d="M790 282 h2.5 l1.3 -1.8 h3.4 l1.3 1.8 h2.5 v7.6 h-11z" fill="none" stroke="#c6cacb" stroke-width="1.05" stroke-linejoin="round"/><circle cx="795.5" cy="285.8" r="2.3" fill="none" stroke="#c6cacb" stroke-width="1"/><path d="M812.5 282.5 h2.5 l3.8 -3 v10.4 l-3.8 -3 h-2.5z" fill="none" stroke="#c6cacb" stroke-width="1.05" stroke-linejoin="round"/><path d="M820.8 282.2 q1.4 2.5 0 5 M823 281 q2 3.7 0 7.5" fill="none" stroke="#c6cacb" stroke-width="1"/><path d="M836.5 280.5 L839.6 283.6 M842.4 286.4 L845.5 289.5" stroke="#c6cacb" stroke-width="1"/><path d="M836.2 283.3 V280.2 H839.3 M845.8 286.7 V289.8 H842.7" fill="none" stroke="#c6cacb" stroke-width="1.1"/></svg>
<div class="a" style="left:867px;top:7px;width:159px;height:8.5px;background:#0d1214;border-radius:0 0 5px 0"></div>
<div class="a" style="left:1068.6px;top:7px;width:8px;height:8.5px;background:#0d1214;border-radius:0 0 0 5px"></div>
<div class="a" style="left:878px;top:21px;width:75px;height:17px;background:#333b3e;border-radius:9px"></div>
<div class="t" style="left:887px;top:25px;font-size:9px;letter-spacing:-0.26px;color:#4fc8ad">Uniform Speed</div>
<div class="t" style="left:969.5px;top:25px;font-size:9px;letter-spacing:-0.45px;color:#d6dadb">Speed Ramping</div>
<div class="t" style="left:878px;top:48px;font-size:9px;letter-spacing:-0.5px;color:#d6dadb">Speed</div>
<svg style="left:0;top:0" width="1080" height="496"><path d="M1051.3 54 A4.9 4.9 0 1 0 1053.3 48.1" fill="none" stroke="#c8cccd" stroke-width="1.15"/><path d="M1050.4 47.4 L1054.4 47.6 L1050.6 51.4 Z" fill="#c8cccd"/></svg>
<div class="a" style="left:880px;top:71.5px;width:120px;height:2px;background:#3a4144;border-radius:1px"></div>
<svg style="left:938px;top:67.5px" width="10" height="10"><circle cx="5" cy="5" r="3.8" fill="#6f7679" stroke="#d4d8d9" stroke-width="1.4"/></svg>
<div class="a" style="left:1014px;top:64.5px;width:50px;height:15.5px;background:#181d1f;border-radius:3px"></div>
<div class="t" style="left:1020.5px;top:67.5px;font-size:9px;letter-spacing:-0.17px;color:#d6dadb">1.40</div>
<div class="t" style="left:878px;top:99px;font-size:9px;letter-spacing:-0.05px;color:#d6dadb">Duration</div>
<div class="a" style="left:878px;top:115px;width:186px;height:16.5px;background:#181d1f;border-radius:3px"></div>
<div class="t" style="left:885.5px;top:118.5px;font-size:9px;letter-spacing:-0.46px;color:#c8cccd">00:00:04:08</div>
<div class="t" style="left:878px;top:150px;font-size:9px;letter-spacing:-0.56px;color:#d6dadb">Reverse Speed</div>
<div class="a" style="left:1047px;top:149.6px;width:17.2px;height:10.2px;border:1.1px solid #c5c9ca;border-radius:6px"></div>
<div class="a" style="left:1049.6px;top:151.9px;width:5.6px;height:5.6px;background:#d5d9da;border-radius:50%"></div>
<div class="t" style="left:878px;top:179px;font-size:9px;letter-spacing:-0.1px;color:#d6dadb">Maintain Pitch</div>
<div class="a" style="left:1047px;top:178px;width:17.2px;height:10px;border:1.1px solid #3fb598;border-radius:6px;background:#1b2c2a"></div>
<div class="a" style="left:1055.8px;top:180.2px;width:5.6px;height:5.6px;background:#4fd3b3;border-radius:50%"></div>
<div class="t" style="left:878px;top:206.5px;font-size:9px;letter-spacing:-0.24px;color:#d6dadb">AI Frame Interpolation</div>
<svg style="left:964.5px;top:206.5px" width="10" height="10"><circle cx="5" cy="5" r="4.2" fill="none" stroke="#c0c4c5" stroke-width="0.9"/><text x="3.1" y="7.6" font-size="6.5" fill="#c0c4c5" font-family="Liberation Sans">?</text></svg>
<div class="a" style="left:878px;top:223.5px;width:186px;height:16.5px;background:#181d1f;border-radius:3px"></div>
<div class="t" style="left:883.5px;top:227px;font-size:9px;letter-spacing:-0.35px;color:#cfd3d4">Frame Sampling</div>
<svg style="left:1053px;top:229.5px" width="7" height="5"><path d="M0.8 0.8 L3.3 3.3 L5.8 0.8" fill="none" stroke="#c8cccd" stroke-width="1"/></svg>
<div class="a" style="left:3px;top:303.6px;width:858px;height:29px;background:#121719;border-radius:7px 7px 0 0"></div>
<div class="a" style="left:3px;top:332.5px;width:858px;height:23px;background:#181d1f"></div>
<div class="a" style="left:3px;top:355.5px;width:858px;height:141px;background:#1f2527"></div>
<div class="a" style="left:77.5px;top:355.5px;width:783.5px;height:50.5px;background:#1c2224"></div>
<div class="a" style="left:3px;top:406px;width:858px;height:49px;background:#212729"></div>
<div class="a" style="left:3px;top:455px;width:858px;height:31px;background:#1f2527"></div>
<svg style="left:0;top:0" width="1080" height="496"><g transform="translate(11.5,319)"><rect x="-5" y="-5" width="4.2" height="4.2" rx="1.6" fill="none" stroke="#c6cacb" stroke-width="1" stroke-linecap="round" stroke-linejoin="round"/><rect x="0.8" y="-5" width="4.2" height="4.2" rx="1.6" fill="none" stroke="#c6cacb" stroke-width="1" stroke-linecap="round" stroke-linejoin="round"/><rect x="-5" y="0.8" width="4.2" height="4.2" rx="1.6" fill="none" stroke="#c6cacb" stroke-width="1" stroke-linecap="round" stroke-linejoin="round"/><rect x="0.8" y="0.8" width="4.2" height="4.2" rx="1.6" fill="none" stroke="#c6cacb" stroke-width="1" stroke-linecap="round" stroke-linejoin="round"/></g><g transform="translate(33.3,319)"><path d="M-5 -4.5 L3.5 -1.5 L0.3 0 L3.8 3.5 L2.6 4.6 L-0.8 1.2 L-2.3 4.3 Z" fill="none" stroke="#c6cacb" stroke-width="1" stroke-linecap="round" stroke-linejoin="round"/><path d="M4.2 5.8 L5.8 4.2 L5.8 5.8z" fill="#c6cacb"/></g><g transform="translate(60.2,319)"><path d="M-4.5 -2.5 H1.5 A3.3 3.3 0 0 1 1.5 4.1 H-3" fill="none" stroke="#c6cacb" stroke-width="1" stroke-linecap="round" stroke-linejoin="round"/><path d="M-2 -5 L-4.6 -2.5 L-2 0" fill="none" stroke="#c6cacb" stroke-width="1" stroke-linecap="round" stroke-linejoin="round"/></g><g transform="translate(85.2,319)"><rect x="-5.5" y="-5.5" width="11" height="11" rx="2.5" fill="none" stroke="#4e5456" stroke-width="1" stroke-linecap="round" stroke-linejoin="round"/><path d="M-2.5 -1.5 v3 M-1 -3 v6 M0.5 -2 v4 M2 -1 v2" fill="none" stroke="#4e5456" stroke-width="1" stroke-linecap="round" stroke-linejoin="round"/></g><g transform="translate(111,319)"><path d="M4.5 -2.5 H-1.5 A3.3 3.3 0 0 0 -1.5 4.1 H3" fill="none" stroke="#4e5456" stroke-width="1" stroke-linecap="round" stroke-linejoin="round"/><path d="M2 -5 L4.6 -2.5 L2 0" fill="none" stroke="#4e5456" stroke-width="1" stroke-linecap="round" stroke-linejoin="round"/></g><g transform="translate(136.7,319)"><path d="M-5 -3.5 H5 M-2 -3.5 V-5.3 H2 V-3.5 M-3.8 -3.5 L-3.3 5.3 H3.3 L3.8 -3.5 M-1.2 -1 V3 M1.2 -1 V3" fill="none" stroke="#c6cacb" stroke-width="1" stroke-linecap="round" stroke-linejoin="round"/></g><g transform="translate(162,319)"><circle cx="-3" cy="3.3" r="2" fill="none" stroke="#4e5456" stroke-width="1" stroke-linecap="round" stroke-linejoin="round"/><circle cx="3" cy="3.3" r="2" fill="none" stroke="#4e5456" stroke-width="1" stroke-linecap="round" stroke-linejoin="round"/><path d="M-1.8 1.6 L3.5 -5.5 M1.8 1.6 L-3.5 -5.5" fill="none" stroke="#4e5456" stroke-width="1" stroke-linecap="round" stroke-linejoin="round"/></g><g transform="translate(188,319)"><rect x="-4" y="-4" width="8" height="8" fill="none" stroke="#c6cacb" stroke-width="1" stroke-linecap="round" stroke-linejoin="round"/><path d="M-6 -6 L-4 -4 M6 -6 L4 -4 M-6 6 L-4 4 M6 6 L4 4" fill="none" stroke="#c6cacb" stroke-width="1" stroke-linecap="round" stroke-linejoin="round"/><circle cx="0" cy="0" r="1.3" fill="none" stroke="#c6cacb" stroke-width="0.8" stroke-linecap="round" stroke-linejoin="round"/></g><g transform="translate(213.3,319)"><path d="M-2.5 3.5 V-3 L5 -5 V2.5 M-2.5 -1 L5 -3" fill="none" stroke="#c6cacb" stroke-width="1" stroke-linecap="round" stroke-linejoin="round"/><circle cx="-4" cy="3.8" r="1.6" fill="none" stroke="#c6cacb" stroke-width="1" stroke-linecap="round" stroke-linejoin="round"/><circle cx="3.5" cy="3" r="1.6" fill="none" stroke="#c6cacb" stroke-width="1" stroke-linecap="round" stroke-linejoin="round"/></g><g transform="translate(239.6,319)"><path d="M-5 -3.3 V-4.8 H4 V-3.3 M-0.5 -4.8 V5 M-2.5 5 H1.5" fill="none" stroke="#c6cacb" stroke-width="1.2" stroke-linecap="round" stroke-linejoin="round"/><circle cx="5.2" cy="4.8" r="0.9" fill="#c6cacb"/></g><g transform="translate(265.6,319)"><rect x="-5" y="-4" width="8.5" height="8.5" rx="1" fill="none" stroke="#c6cacb" stroke-width="1" stroke-linecap="round" stroke-linejoin="round"/><circle cx="4" cy="-6" r="1.4" fill="#e2515a"/><path d="M4.5 5 L5.5 4 L5.5 5z" fill="#c6cacb"/></g><g transform="translate(290.7,319)"><rect x="-5" y="-5" width="9" height="10" rx="2.5" fill="none" stroke="#c6cacb" stroke-width="1" stroke-linecap="round" stroke-linejoin="round" stroke-dasharray="2 1.2"/><path d="M-1.5 -2 L2 0 L-1.5 2z" fill="none" stroke="#c6cacb" stroke-width="0.9" stroke-linecap="round" stroke-linejoin="round"/><circle cx="3.5" cy="3.5" r="2.3" fill="#121719" stroke="#c6cacb" stroke-width="0.9"/></g><g transform="translate(316,319)"><path d="M-3.5 -4.3 A5.3 5.3 0 1 0 3 -4.7" fill="none" stroke="#c6cacb" stroke-width="1" stroke-linecap="round" stroke-linejoin="round"/><path d="M-1 -1 L1.2 1" fill="none" stroke="#c6cacb" stroke-width="1" stroke-linecap="round" stroke-linejoin="round"/><path d="M4.2 4.2 l1.3 1.3 l0 -1.3z" fill="#c6cacb"/></g><g transform="translate(341.1,319)"><circle cx="0" cy="-2.3" r="2.9" fill="none" stroke="#c6cacb" stroke-width="1" stroke-linecap="round" stroke-linejoin="round"/><circle cx="-2.4" cy="1.8" r="2.9" fill="none" stroke="#c6cacb" stroke-width="1" stroke-linecap="round" stroke-linejoin="round"/><circle cx="2.4" cy="1.8" r="2.9" fill="none" stroke="#c6cacb" stroke-width="1" stroke-linecap="round" stroke-linejoin="round"/></g><g transform="translate(367.1,319)"><path d="M3.5 -4.5 A5.2 5.2 0 1 0 2 4.8" fill="none" stroke="#c6cacb" stroke-width="1" stroke-linecap="round" stroke-linejoin="round"/><circle cx="-0.7" cy="0" r="2" fill="none" stroke="#c6cacb" stroke-width="1" stroke-linecap="round" stroke-linejoin="round"/><path d="M3 -5.8 v-1" fill="none" stroke="#c6cacb" stroke-width="1" stroke-linecap="round" stroke-linejoin="round"/><text x="1.2" y="6" font-size="5" font-weight="bold" fill="#c6cacb" font-family="Liberation Sans">AI</text></g><g transform="translate(392.9,319)"><path d="M-3.5 -3.8 L-0.3 0 L-3.5 3.8 M0.5 -3.8 L3.7 0 L0.5 3.8" fill="none" stroke="#c6cacb" stroke-width="1.1" stroke-linecap="round" stroke-linejoin="round"/></g><g transform="translate(446.7,319)"><circle cx="0" cy="0" r="6.3" fill="#2a9b86" stroke="#7fe0c9" stroke-width="1"/><rect x="-4.2" y="-2.6" width="8.4" height="5.2" rx="2.4" fill="#123c36"/><circle cx="-1.8" cy="0" r="0.9" fill="#8fe8d3"/><circle cx="1.8" cy="0" r="0.9" fill="#8fe8d3"/></g><g transform="translate(472.2,319)"><rect x="-5" y="-2" width="10" height="4.5" fill="none" stroke="#4fc9ad" stroke-width="1" stroke-linecap="round" stroke-linejoin="round"/><path d="M0 -6 v2.5 M0 4.5 v2 M-3.5 -5.5 l1 1.5 M3.5 -5.5 l-1 1.5 M-6 0 h-0.5 M-2 0.2 h4" fill="none" stroke="#4fc9ad" stroke-width="1" stroke-linecap="round" stroke-linejoin="round"/></g><g transform="translate(497.8,319)"><rect x="-3.5" y="-3" width="8.5" height="8.5" rx="2" fill="none" stroke="#c6cacb" stroke-width="1" stroke-linecap="round" stroke-linejoin="round"/><circle cx="-3.3" cy="-3.3" r="2.3" fill="#121719" stroke="#c6cacb" stroke-width="0.9"/><path d="M-0.5 -1 L2.3 1.2 L-0.5 3.2z" fill="none" stroke="#c6cacb" stroke-width="0.9" stroke-linecap="round" stroke-linejoin="round"/></g><g transform="translate(523.3,319)"><rect x="-2.5" y="-4" width="8" height="8.5" rx="2" fill="none" stroke="#c6cacb" stroke-width="1" stroke-linecap="round" stroke-linejoin="round"/><path d="M-2.5 -2.5 H-5.5 V4.5 H-2.5" fill="none" stroke="#c6cacb" stroke-width="1" stroke-linecap="round" stroke-linejoin="round"/><path d="M0 -1.5 L3 0.5 L0 2.5z" fill="none" stroke="#c6cacb" stroke-width="0.9" stroke-linecap="round" stroke-linejoin="round"/><circle cx="5.5" cy="-5" r="1.1" fill="#c6cacb"/></g><g transform="translate(548.9,319)"><circle cx="0" cy="0" r="5.3" fill="none" stroke="#c6cacb" stroke-width="1" stroke-linecap="round" stroke-linejoin="round" stroke-dasharray="3.5 1.5"/><path d="M-1.5 -2.3 L2.3 0 L-1.5 2.3z" fill="none" stroke="#c6cacb" stroke-width="0.9" stroke-linecap="round" stroke-linejoin="round"/></g><g transform="translate(574.4,319)"><path d="M-4.5 -5 H4.5 V2.5 L0 5.5 L-4.5 2.5z" fill="none" stroke="#c6cacb" stroke-width="1" stroke-linecap="round" stroke-linejoin="round"/></g><g transform="translate(600,319)"><rect x="-2" y="-5.5" width="4" height="7" rx="2" fill="none" stroke="#c6cacb" stroke-width="1" stroke-linecap="round" stroke-linejoin="round"/><path d="M-4 -0.5 A4 4 0 0 0 4 -0.5 M0 3.5 V5.5 M-2.5 5.5 H2.5" fill="none" stroke="#c6cacb" stroke-width="1" stroke-linecap="round" stroke-linejoin="round"/></g><g transform="translate(625.6,319)"><path d="M-5 -4.5 H4 M-5 -2 H1 M-5 0.5 H-1 M-5 3 H-2.5 M-5 5.5 H-2.5" fill="none" stroke="#c6cacb" stroke-width="0.9" stroke-linecap="round" stroke-linejoin="round"/><path d="M0.5 4.5 V-1 L4.5 -2 V3.5" fill="none" stroke="#c6cacb" stroke-width="0.9" stroke-linecap="round" stroke-linejoin="round"/><circle cx="-0.3" cy="4.5" r="1.1" fill="#c6cacb"/><circle cx="3.7" cy="3.6" r="1.1" fill="#c6cacb"/></g><g transform="translate(651,319)"><path d="M-1.5 -5 H-4 Q-5.5 -5 -5.5 -3.5 V4 Q-5.5 5.5 -4 5.5 H-1.5 M-1.5 -5 V5.5 M-1.5 -5 H2.5 Q4 -5 4 -3.5 V-1" fill="none" stroke="#c6cacb" stroke-width="1" stroke-linecap="round" stroke-linejoin="round"/><ellipse cx="3" cy="3.3" rx="3.2" ry="2.2" fill="#121719" stroke="#c6cacb" stroke-width="0.9"/><circle cx="3" cy="3.3" r="0.9" fill="#c6cacb"/></g><g transform="translate(677.1,319)"><rect x="-5.5" y="-5" width="11" height="10" rx="2" fill="none" stroke="#c6cacb" stroke-width="1" stroke-linecap="round" stroke-linejoin="round"/><path d="M-3.3 0 H3.3 M-1.8 -1.5 L-3.3 0 L-1.8 1.5 M1.8 -1.5 L3.3 0 L1.8 1.5" fill="none" stroke="#c6cacb" stroke-width="0.9" stroke-linecap="round" stroke-linejoin="round"/></g><g transform="translate(703.4,319)"><circle cx="0" cy="0" r="5.3" fill="none" stroke="#c6cacb" stroke-width="1" stroke-linecap="round" stroke-linejoin="round"/><path d="M-2.6 0 H2.6" fill="none" stroke="#c6cacb" stroke-width="1" stroke-linecap="round" stroke-linejoin="round"/></g><g transform="translate(792.6,319)"><circle cx="0" cy="0" r="5.3" fill="none" stroke="#c6cacb" stroke-width="1" stroke-linecap="round" stroke-linejoin="round"/><path d="M-2.6 0 H2.6 M0 -2.6 V2.6" fill="none" stroke="#c6cacb" stroke-width="1" stroke-linecap="round" stroke-linejoin="round"/></g><g transform="translate(829.3,319)"><rect x="-4.5" y="-6.00" width="3.6" height="1.3" fill="#5c6366"/><rect x="0.9" y="-6.00" width="3.6" height="1.3" fill="#5c6366"/><rect x="-4.5" y="-3.65" width="3.6" height="1.3" fill="#5c6366"/><rect x="0.9" y="-3.65" width="3.6" height="1.3" fill="#5c6366"/><rect x="-4.5" y="-1.30" width="3.6" height="1.3" fill="#5c6366"/><rect x="0.9" y="-1.30" width="3.6" height="1.3" fill="#5c6366"/><rect x="-4.5" y="1.05" width="3.6" height="1.3" fill="#5c6366"/><rect x="0.9" y="1.05" width="3.6" height="1.3" fill="#8a6a3a"/><rect x="-4.5" y="3.40" width="3.6" height="1.3" fill="#5c6366"/><rect x="0.9" y="3.40" width="3.6" height="1.3" fill="#5c6366"/><rect x="-4.5" y="5.75" width="3.6" height="1.3" fill="#5c6366"/><rect x="0.9" y="5.75" width="3.6" height="1.3" fill="#5c6366"/></g><g transform="translate(846.6,319)"><path d="M-2 -1 H2 L0 1.3z" fill="#c6cacb"/></g></svg>
<div class="a" style="left:715.5px;top:318.2px;width:31px;height:2px;background:#c6cacb;border-radius:1px"></div>
<div class="a" style="left:746px;top:318.6px;width:33.5px;height:1.2px;background:#3a4043"></div>
<svg style="left:741px;top:314.5px" width="10" height="10"><circle cx="4.8" cy="4.8" r="3.6" fill="#8f9597" stroke="#c8cccd" stroke-width="1.1"/></svg>
<svg style="left:0;top:0" width="1080" height="496"><g transform="translate(17.6,344.6)" fill="none" stroke="#c6cacb" stroke-width="1" stroke-linecap="round"><path d="M-2.8 -5.3 L3.1 5"/><path d="M-0.6 -3.2 Q1.5 -6.5 4 -5.3 Q5.8 -4 4.4 -1.6 L0.5 1.6 Q-1.5 3 -2.8 1.6 Q-5 1.8 -4.4 4.3 Q-3.5 6 -1 4.5"/></g><g transform="translate(39.8,344.6)" fill="none" stroke="#4fc9ad" stroke-width="1.1"><rect x="-6" y="-3.3" width="5.5" height="6.6" rx="1.5"/><rect x="0.5" y="-3.3" width="5.5" height="6.6" rx="1.5"/><path d="M-2.5 0 H2.5 M1 -1.5 L2.5 0 L1 1.5"/></g><g transform="translate(62.6,344.6)" fill="none" stroke="#c6cacb" stroke-width="1"><path d="M-1 -0.8 H-3 Q-5 -0.8 -5 -2.8 Q-5 -4.8 -3 -4.8 H2 Q4 -4.8 4 -2.8 Q4 -0.8 2 -0.8 M1 0.8 H3 Q5.5 0.8 5.5 3 Q5.5 5.2 3 5.2 H-3 Q-5 5.2 -5 3 Q-5 0.8 -3 0.8 M0 -2 V2 M-1.3 0 H1.3" stroke-width="0.95"/></g></svg>
<div class="t" style="left:76.90px;top:335.2px;font-size:6.9px;letter-spacing:0px;color:#94999b">00:00</div>
<div class="t" style="left:148.15px;top:335.2px;font-size:6.9px;letter-spacing:0px;color:#94999b">00:05</div>
<div class="t" style="left:219.40px;top:335.2px;font-size:6.9px;letter-spacing:0px;color:#94999b">00:10</div>
<div class="t" style="left:290.65px;top:335.2px;font-size:6.9px;letter-spacing:0px;color:#94999b">00:15</div>
<div class="t" style="left:361.90px;top:335.2px;font-size:6.9px;letter-spacing:0px;color:#94999b">00:20</div>
<div class="t" style="left:433.15px;top:335.2px;font-size:6.9px;letter-spacing:0px;color:#94999b">00:25</div>
<div class="t" style="left:504.40px;top:335.2px;font-size:6.9px;letter-spacing:0px;color:#94999b">00:30</div>
<div class="t" style="left:575.65px;top:335.2px;font-size:6.9px;letter-spacing:0px;color:#94999b">00:35</div>
<div class="t" style="left:646.90px;top:335.2px;font-size:6.9px;letter-spacing:0px;color:#94999b">00:40</div>
<div class="t" style="left:718.15px;top:335.2px;font-size:6.9px;letter-spacing:0px;color:#94999b">00:45</div>
<div class="t" style="left:789.40px;top:335.2px;font-size:6.9px;letter-spacing:0px;color:#94999b">00:50</div>
<svg style="left:0;top:0" width="1080" height="496"><rect x="77.00" y="345.6" width="0.9" height="4.3" fill="#8d9294"/><rect x="91.25" y="348" width="0.9" height="1.1" fill="#6d7274"/><rect x="105.50" y="348" width="0.9" height="1.1" fill="#6d7274"/><rect x="119.75" y="348" width="0.9" height="1.1" fill="#6d7274"/><rect x="134.00" y="348" width="0.9" height="1.1" fill="#6d7274"/><rect x="148.25" y="345.6" width="0.9" height="4.3" fill="#8d9294"/><rect x="162.50" y="348" width="0.9" height="1.1" fill="#6d7274"/><rect x="176.75" y="348" width="0.9" height="1.1" fill="#6d7274"/><rect x="191.00" y="348" width="0.9" height="1.1" fill="#6d7274"/><rect x="205.25" y="348" width="0.9" height="1.1" fill="#6d7274"/><rect x="219.50" y="345.6" width="0.9" height="4.3" fill="#8d9294"/><rect x="233.75" y="348" width="0.9" height="1.1" fill="#6d7274"/><rect x="248.00" y="348" width="0.9" height="1.1" fill="#6d7274"/><rect x="262.25" y="348" width="0.9" height="1.1" fill="#6d7274"/><rect x="276.50" y="348" width="0.9" height="1.1" fill="#6d7274"/><rect x="290.75" y="345.6" width="0.9" height="4.3" fill="#8d9294"/><rect x="305.00" y="348" width="0.9" height="1.1" fill="#6d7274"/><rect x="319.25" y="348" width="0.9" height="1.1" fill="#6d7274"/><rect x="333.50" y="348" width="0.9" height="1.1" fill="#6d7274"/><rect x="347.75" y="348" width="0.9" height="1.1" fill="#6d7274"/><rect x="362.00" y="345.6" width="0.9" height="4.3" fill="#8d9294"/><rect x="376.25" y="348" width="0.9" height="1.1" fill="#6d7274"/><rect x="390.50" y="348" width="0.9" height="1.1" fill="#6d7274"/><rect x="404.75" y="348" width="0.9" height="1.1" fill="#6d7274"/><rect x="419.00" y="348" width="0.9" height="1.1" fill="#6d7274"/><rect x="433.25" y="345.6" width="0.9" height="4.3" fill="#8d9294"/><rect x="447.50" y="348" width="0.9" height="1.1" fill="#6d7274"/><rect x="461.75" y="348" width="0.9" height="1.1" fill="#6d7274"/><rect x="476.00" y="348" width="0.9" height="1.1" fill="#6d7274"/><rect x="490.25" y="348" width="0.9" height="1.1" fill="#6d7274"/><rect x="504.50" y="345.6" width="0.9" height="4.3" fill="#8d9294"/><rect x="518.75" y="348" width="0.9" height="1.1" fill="#6d7274"/><rect x="533.00" y="348" width="0.9" height="1.1" fill="#6d7274"/><rect x="547.25" y="348" width="0.9" height="1.1" fill="#6d7274"/><rect x="561.50" y="348" width="0.9" height="1.1" fill="#6d7274"/><rect x="575.75" y="345.6" width="0.9" height="4.3" fill="#8d9294"/><rect x="590.00" y="348" width="0.9" height="1.1" fill="#6d7274"/><rect x="604.25" y="348" width="0.9" height="1.1" fill="#6d7274"/><rect x="618.50" y="348" width="0.9" height="1.1" fill="#6d7274"/><rect x="632.75" y="348" width="0.9" height="1.1" fill="#6d7274"/><rect x="647.00" y="345.6" width="0.9" height="4.3" fill="#8d9294"/><rect x="661.25" y="348" width="0.9" height="1.1" fill="#6d7274"/><rect x="675.50" y="348" width="0.9" height="1.1" fill="#6d7274"/><rect x="689.75" y="348" width="0.9" height="1.1" fill="#6d7274"/><rect x="704.00" y="348" width="0.9" height="1.1" fill="#6d7274"/><rect x="718.25" y="345.6" width="0.9" height="4.3" fill="#8d9294"/><rect x="732.50" y="348" width="0.9" height="1.1" fill="#6d7274"/><rect x="746.75" y="348" width="0.9" height="1.1" fill="#6d7274"/><rect x="761.00" y="348" width="0.9" height="1.1" fill="#6d7274"/><rect x="775.25" y="348" width="0.9" height="1.1" fill="#6d7274"/><rect x="789.50" y="345.6" width="0.9" height="4.3" fill="#8d9294"/><rect x="803.75" y="348" width="0.9" height="1.1" fill="#6d7274"/><rect x="818.00" y="348" width="0.9" height="1.1" fill="#6d7274"/><rect x="832.25" y="348" width="0.9" height="1.1" fill="#6d7274"/><rect x="846.50" y="348" width="0.9" height="1.1" fill="#6d7274"/><rect x="860.75" y="345.6" width="0.9" height="4.3" fill="#8d9294"/></svg>
<div class="a" style="left:129.6px;top:354.2px;width:447.5px;height:2px;background:#cc6058"></div>
<div class="a" style="left:852.8px;top:356.5px;width:7.6px;height:134.3px;background:#444b4e;border-radius:4px"></div>
<div class="t" style="left:11.5px;top:419.5px;font-size:8px;letter-spacing:-0.55px;color:#a3a8aa">Video 1</div>
<div class="t" style="left:11.5px;top:459.5px;font-size:8px;letter-spacing:-0.55px;color:#a3a8aa">Audio 1</div>
<svg style="left:0;top:0" width="1080" height="496"><g transform="translate(14.6,437.2)" fill="none" stroke="#b5babb" stroke-width="0.9"><rect x="-3.5" y="-1.5" width="7" height="5.3" rx="0.6"/><path d="M-2.5 -1.5 V-3.2 A1.5 1.5 0 0 1 0.5 -3.2"/><path d="M0 0.5 V1.8"/></g><g transform="translate(31.7,437.2)" fill="none" stroke="#b5babb" stroke-width="0.9" stroke-linejoin="round"><path d="M-4.5 -1.5 H-2.5 L0.5 -4 V4 L-2.5 1.5 H-4.5z"/><path d="M2.3 -2 Q3.3 0 2.3 2 M3.8 -3 Q5.3 0 3.8 3"/></g><g transform="translate(48.7,437.2)" fill="none" stroke="#b5babb" stroke-width="0.9"><path d="M-4.5 0 Q0 -4.5 4.5 0 Q0 4.5 -4.5 0z"/><circle cx="0" cy="0" r="1.3" fill="#b5babb"/></g><g transform="translate(14.6,478)" fill="none" stroke="#b5babb" stroke-width="0.9"><rect x="-3.5" y="-1.5" width="7" height="5.3" rx="0.6"/><path d="M-2.5 -1.5 V-3.2 A1.5 1.5 0 0 1 0.5 -3.2"/><path d="M0 0.5 V1.8"/></g><g transform="translate(31.7,478)" fill="none" stroke="#b5babb" stroke-width="0.9" stroke-linejoin="round"><path d="M-4.5 -1.5 H-2.5 L0.5 -4 V4 L-2.5 1.5 H-4.5z"/><path d="M2.3 -2 Q3.3 0 2.3 2 M3.8 -3 Q5.3 0 3.8 3"/></g></svg>
<div class="a" style="left:77.5px;top:407.2px;width:51.5px;height:46.6px;border-radius:3px;overflow:hidden;background:#0e2a26"><div class="a" style="left:0;top:0.0px;width:100%;height:29.2px;background:#ecece9;overflow:hidden"><svg style="left:0;top:0" width="51.5" height="29.2"><defs><linearGradient id="c1g" x1="0" y1="0" x2="0" y2="1"><stop offset="0" stop-color="#f2f2f0"/><stop offset="1" stop-color="#dcdcda"/></linearGradient></defs><rect width="100%" height="100%" fill="url(#c1g)"/><path d="M10 20 L15 16 H42 L38 21 H10z M12 21 v6 M37 21 v6 M40 17 v8" fill="#f2f2f2" stroke="#555" stroke-width="0.6"/><circle cx="26" cy="6" r="2.8" fill="#f6f6f6" fill="none" stroke="#505050" stroke-width="0.6"/><path d="M26 9 v7 M22.5 12 h7 M26 16 l-3 3 M26 16 l3 3" fill="none" stroke="#505050" stroke-width="0.6"/><path d="M30 12 h9 v5 h-9z" fill="none" stroke="#505050" stroke-width="0.6"/><rect x="4" y="5" width="10" height="10" rx="2.5" fill="#e4e4e2" fill-opacity="0.9" stroke="#d0d0ce" stroke-width="0.7"/><path d="M7.5 7.800000000000001 L11.2 10.0 L7.5 12.2z" fill="#a5a5a5"/></svg></div><div class="a" style="left:0;top:29.2px;width:100%;height:17.4px;background:#0f2b27;border:1px solid #24504a;border-top:none;border-radius:0 0 3px 3px"></div><div class="a" style="left:0;top:34.9px;width:100%;height:1.6px;background:#4ccaa9"></div><svg style="left:0;top:29.2px" width="51.5" height="17.4"><path d="M0 16.400000000000034 L0.0,15.9 L1.2,16.0 L2.5,15.8 L3.7,16.0 L4.9,15.8 L6.1,15.9 L7.4,16.1 L8.6,15.8 L9.8,16.1 L11.0,15.9 L12.3,16.0 L13.5,16.0 L14.7,15.9 L15.9,15.7 L17.2,16.0 L18.4,16.0 L19.6,15.8 L20.8,15.6 L22.1,15.8 L23.3,15.9 L24.5,15.6 L25.8,16.1 L27.0,15.7 L28.2,15.9 L29.4,16.0 L30.7,16.0 L31.9,15.9 L33.1,15.7 L34.3,16.0 L35.6,15.8 L36.8,15.8 L38.0,15.9 L39.2,15.8 L40.5,16.0 L41.7,16.1 L42.9,16.0 L44.1,15.8 L45.4,15.9 L46.6,15.9 L47.8,15.8 L49.0,15.9 L50.3,15.9 L51.5,15.7 L51.5 16.400000000000034 Z" fill="#3aae94"/></svg></div>
<div class="a" style="left:130.0px;top:407.2px;width:41.8px;height:46.6px;border-radius:3px;overflow:hidden;background:#0e2a26"><div class="a" style="left:0;top:0;width:100%;height:10.9px;background:#d9825a"></div><div class="a" style="left:37.6px;top:3px;width:1px;height:5px;background:#3b2418"></div><div class="a" style="left:0;top:10.9px;width:100%;height:18.3px;background:#f0f0ee;overflow:hidden"><svg style="left:0;top:0" width="41.8" height="18.3"><path d="M20.9 0 V20" stroke="#e4e4e2" stroke-width="0.6"/><text x="20.5" y="16.4" font-size="8.8" fill="#cdcdcb" font-family="Liberation Sans" letter-spacing="-0.1">scene_2_vid</text><circle cx="17" cy="2.5" r="2" fill="#f4f4f4" fill="none" stroke="#505050" stroke-width="0.6"/><path d="M17 4.5 V16.5 M15 7.5 L17 6.5 L19 8.5" stroke="#404040" stroke-width="0.8" fill="none"/><circle cx="23.8" cy="5" r="1.8" fill="none" stroke="#777" stroke-width="0.5"/><path d="M25.8 5 h3 M29.8 4 v2" stroke="#777" stroke-width="0.5"/><rect x="7" y="5.2" width="10" height="10" rx="2.5" fill="#fff" fill-opacity="0.9" stroke="#d6d6d6" stroke-width="0.7"/><path d="M10.5 8.0 L14.2 10.2 L10.5 12.399999999999999z" fill="#a5a5a5"/></svg></div><div class="a" style="left:0;top:29.2px;width:100%;height:17.4px;background:#0f2b27;border:1px solid #24504a;border-top:none;border-radius:0 0 3px 3px"></div><div class="a" style="left:0;top:34.9px;width:100%;height:1.6px;background:#4ccaa9"></div><svg style="left:0;top:29.2px" width="41.8" height="17.4"><path d="M0 16.400000000000034 L0.0,15.7 L1.2,16.0 L2.5,15.8 L3.7,15.8 L4.9,15.7 L6.1,15.7 L7.4,15.9 L8.6,15.6 L9.8,16.0 L11.1,15.9 L12.3,15.7 L13.5,16.0 L14.8,15.8 L16.0,16.1 L17.2,15.8 L18.4,15.7 L19.7,15.8 L20.9,15.7 L22.1,15.9 L23.4,15.7 L24.6,15.8 L25.8,15.8 L27.0,15.9 L28.3,15.7 L29.5,15.6 L30.7,15.9 L32.0,15.8 L33.2,16.1 L34.4,15.7 L35.7,15.8 L36.9,15.6 L38.1,15.7 L39.3,15.9 L40.6,15.9 L41.8,15.8 L41.8 16.400000000000034 Z" fill="#3aae94"/></svg></div>
<div class="a" style="left:173.3px;top:407.2px;width:41.9px;height:46.6px;border-radius:3px;overflow:hidden;background:#0e2a26"><div class="a" style="left:0;top:0;width:100%;height:10.9px;background:#d9825a"></div><div class="a" style="left:37.7px;top:3px;width:1px;height:5px;background:#3b2418"></div><div class="a" style="left:0;top:10.9px;width:100%;height:18.3px;background:#f0f0ee;overflow:hidden"><svg style="left:0;top:0" width="41.9" height="18.3"><path d="M20.9 0 V20" stroke="#e4e4e2" stroke-width="0.6"/><text x="20.5" y="16.4" font-size="8.8" fill="#cdcdcb" font-family="Liberation Sans" letter-spacing="-0.1">scene_3_vid</text><circle cx="17" cy="2.5" r="2" fill="#f4f4f4" fill="none" stroke="#505050" stroke-width="0.6"/><path d="M17 4.5 V16.5 M15 7.5 L17 6.5 L19 8.5" stroke="#404040" stroke-width="0.8" fill="none"/><circle cx="23.9" cy="5" r="1.8" fill="none" stroke="#777" stroke-width="0.5"/><path d="M25.9 5 h3 M29.9 4 v2" stroke="#777" stroke-width="0.5"/><rect x="7" y="5.2" width="10" height="10" rx="2.5" fill="#fff" fill-opacity="0.9" stroke="#d6d6d6" stroke-width="0.7"/><path d="M10.5 8.0 L14.2 10.2 L10.5 12.399999999999999z" fill="#a5a5a5"/></svg></div><div class="a" style="left:0;top:29.2px;width:100%;height:17.4px;background:#0f2b27;border:1px solid #24504a;border-top:none;border-radius:0 0 3px 3px"></div><div class="a" style="left:0;top:34.9px;width:100%;height:1.6px;background:#4ccaa9"></div><svg style="left:0;top:29.2px" width="41.9" height="17.4"><path d="M0 16.400000000000034 L0.0,16.1 L1.2,15.9 L2.5,16.0 L3.7,16.0 L4.9,16.1 L6.2,15.7 L7.4,16.0 L8.6,16.0 L9.9,15.9 L11.1,15.7 L12.3,16.0 L13.6,15.9 L14.8,15.8 L16.0,15.7 L17.3,15.7 L18.5,15.7 L19.7,15.9 L20.9,15.9 L22.2,15.9 L23.4,15.7 L24.6,15.6 L25.9,16.0 L27.1,16.0 L28.3,16.0 L29.6,16.0 L30.8,15.8 L32.0,15.8 L33.3,16.0 L34.5,16.1 L35.7,15.9 L37.0,15.9 L38.2,15.8 L39.4,15.6 L40.7,15.7 L41.9,15.8 L41.9 16.400000000000034 Z" fill="#3aae94"/></svg></div>
<div class="a" style="left:216.5px;top:407.2px;width:64.3px;height:46.6px;border-radius:3px;overflow:hidden;background:#0e2a26"><div class="a" style="left:0;top:0;width:100%;height:10.9px;background:#d9825a"></div><div class="a" style="left:60.1px;top:3px;width:1px;height:5px;background:#3b2418"></div><div class="a" style="left:0;top:1.2px;width:51.3px;text-align:center;line-height:9px;font-size:7.5px"><span style="position:relative;font-size:7.5px;letter-spacing:-0.3px;color:#fbeee6;white-space:nowrap">Fast 1.30x<svg style="left:calc(100% + 5.6px);top:2.4px" width="6" height="5"><path d="M0.2 0.2 H5 L2.6 3.2z" fill="#fbeee6"/></svg></span></div><div class="a" style="left:0;top:10.9px;width:100%;height:18.3px;background:#f2f2f0;overflow:hidden"><svg style="left:0;top:0" width="64.3" height="18.3"><path d="M32.2 0 V20" stroke="#e4e4e2" stroke-width="0.6"/><text x="20.5" y="16.4" font-size="8.8" fill="#cdcdcb" font-family="Liberation Sans" letter-spacing="-0.1">scene_4_vid</text><circle cx="17" cy="2.5" r="2" fill="#f4f4f4" fill="none" stroke="#505050" stroke-width="0.6"/><path d="M17 4.5 V16.5 M15 7.5 L17 6.5 L19 8.5" stroke="#404040" stroke-width="0.8" fill="none"/><circle cx="56.30000000000001" cy="3" r="2.6" fill="#f4f4f4" fill="none" stroke="#505050" stroke-width="0.6"/><path d="M56.30000000000001 5.6 v4 M53.30000000000001 7.5 h6" fill="none" stroke="#505050" stroke-width="0.6"/><path d="M50.30000000000001 8.5 h12 v7 h-12z M52.30000000000001 8.5 v7 M59.80000000000001 8.5 v7" fill="#efefef" stroke="#8a8a8a" stroke-width="0.55"/><path d="M53.80000000000001 10 l1.2 6 M57.80000000000001 10 l-0.5 6" stroke="#666" stroke-width="0.7"/><rect x="7" y="5.2" width="10" height="10" rx="2.5" fill="#fff" fill-opacity="0.9" stroke="#d6d6d6" stroke-width="0.7"/><path d="M10.5 8.0 L14.2 10.2 L10.5 12.399999999999999z" fill="#a5a5a5"/></svg></div><div class="a" style="left:0;top:29.2px;width:100%;height:17.4px;background:#0f2b27;border:1px solid #24504a;border-top:none;border-radius:0 0 3px 3px"></div><div class="a" style="left:0;top:34.9px;width:100%;height:1.6px;background:#4ccaa9"></div><svg style="left:0;top:29.2px" width="64.3" height="17.4"><path d="M0 16.400000000000034 L0.0,15.8 L1.2,15.8 L2.4,16.1 L3.6,15.6 L4.9,15.7 L6.1,15.7 L7.3,15.7 L8.5,15.9 L9.7,15.9 L10.9,16.0 L12.1,15.8 L13.3,16.1 L14.6,16.0 L15.8,16.0 L17.0,16.0 L18.2,15.9 L19.4,16.1 L20.6,16.1 L21.8,16.0 L23.1,16.0 L24.3,15.9 L25.5,16.1 L26.7,15.7 L27.9,15.8 L29.1,16.0 L30.3,16.0 L31.5,15.9 L32.8,15.9 L34.0,16.0 L35.2,15.7 L36.4,15.6 L37.6,15.9 L38.8,15.8 L40.0,16.0 L41.2,16.0 L42.5,15.9 L43.7,16.0 L44.9,14.4 L46.1,12.6 L47.3,11.6 L48.5,11.5 L49.7,12.4 L51.0,14.1 L52.2,15.8 L53.4,16.1 L54.6,15.8 L55.8,15.6 L57.0,15.7 L58.2,15.7 L59.4,16.0 L60.7,15.9 L61.9,16.0 L63.1,15.7 L64.3,15.8 L64.3 16.400000000000034 Z" fill="#3aae94"/></svg></div>
<div class="a" style="left:282.0px;top:407.2px;width:60.7px;height:46.6px;border-radius:3px;overflow:hidden;background:#0e2a26"><div class="a" style="left:0;top:0;width:100%;height:10.9px;background:#d9825a"></div><div class="a" style="left:56.5px;top:3px;width:1px;height:5px;background:#3b2418"></div><div class="a" style="left:0;top:1.2px;width:47.7px;text-align:center;line-height:9px;font-size:7.5px"><span style="position:relative;font-size:7.5px;letter-spacing:-0.3px;color:#fbeee6;white-space:nowrap">Fast 1.40x<svg style="left:calc(100% + 5.6px);top:2.4px" width="6" height="5"><path d="M0.2 0.2 H5 L2.6 3.2z" fill="#fbeee6"/></svg></span></div><div class="a" style="left:0;top:10.9px;width:100%;height:18.3px;background:#f1e3cc;overflow:hidden"><svg style="left:0;top:0" width="60.7" height="18.3"><path d="M30.3 0 V20" stroke="#e4e4e2" stroke-width="0.6"/><text x="20.5" y="16.4" font-size="8.8" fill="#cdcdcb" font-family="Liberation Sans" letter-spacing="-0.1">scene_5_vid</text><circle cx="17" cy="2.5" r="2" fill="#f4f4f4" fill="none" stroke="#505050" stroke-width="0.6"/><path d="M17 4.5 V16.5 M15 7.5 L17 6.5 L19 8.5" stroke="#404040" stroke-width="0.8" fill="none"/><circle cx="52.69999999999999" cy="3" r="2.6" fill="#f4f4f4" fill="none" stroke="#505050" stroke-width="0.6"/><path d="M52.69999999999999 5.6 v4 M49.69999999999999 7.5 h6" fill="none" stroke="#505050" stroke-width="0.6"/><path d="M46.69999999999999 8.5 h12 v7 h-12z M48.69999999999999 8.5 v7 M56.19999999999999 8.5 v7" fill="#efefef" stroke="#8a8a8a" stroke-width="0.55"/><path d="M50.19999999999999 10 l1.2 6 M54.19999999999999 10 l-0.5 6" stroke="#666" stroke-width="0.7"/><rect x="7" y="5.2" width="10" height="10" rx="2.5" fill="#fff" fill-opacity="0.9" stroke="#d6d6d6" stroke-width="0.7"/><path d="M10.5 8.0 L14.2 10.2 L10.5 12.399999999999999z" fill="#a5a5a5"/></svg></div><div class="a" style="left:0;top:29.2px;width:100%;height:17.4px;background:#0f2b27;border:1px solid #24504a;border-top:none;border-radius:0 0 3px 3px"></div><div class="a" style="left:0;top:34.9px;width:100%;height:1.6px;background:#4ccaa9"></div><svg style="left:0;top:29.2px" width="60.7" height="17.4"><path d="M0 16.400000000000034 L0.0,15.7 L1.2,15.9 L2.4,16.0 L3.6,15.7 L4.9,15.6 L6.1,15.7 L7.3,15.7 L8.5,15.7 L9.7,15.7 L10.9,16.0 L12.1,15.8 L13.4,15.9 L14.6,16.1 L15.8,16.1 L17.0,15.9 L18.2,16.0 L19.4,15.7 L20.6,15.6 L21.9,15.9 L23.1,15.6 L24.3,15.6 L25.5,15.6 L26.7,15.9 L27.9,16.0 L29.1,16.0 L30.3,16.0 L31.6,16.0 L32.8,15.8 L34.0,15.6 L35.2,15.7 L36.4,15.8 L37.6,15.8 L38.8,15.7 L40.1,16.0 L41.3,15.8 L42.5,15.6 L43.7,15.7 L44.9,15.7 L46.1,15.9 L47.3,16.0 L48.6,15.7 L49.8,15.9 L51.0,15.7 L52.2,15.6 L53.4,15.9 L54.6,15.9 L55.8,15.6 L57.1,15.7 L58.3,16.0 L59.5,16.0 L60.7,16.0 L60.7 16.400000000000034 Z" fill="#3aae94"/></svg></div>
<div class="a" style="left:343.6px;top:407.2px;width:52.4px;height:46.6px;border-radius:3px;overflow:hidden;background:#0e2a26"><div class="a" style="left:0;top:0;width:100%;height:10.9px;background:#d9825a"></div><div class="a" style="left:48.2px;top:3px;width:1px;height:5px;background:#3b2418"></div><div class="a" style="left:0;top:1.2px;width:39.4px;text-align:center;line-height:9px;font-size:7.5px"><span style="position:relative;font-size:7.5px;letter-spacing:-0.3px;color:#fbeee6;white-space:nowrap">Fast 1.60x<svg style="left:calc(100% + 5.6px);top:2.4px" width="6" height="5"><path d="M0.2 0.2 H5 L2.6 3.2z" fill="#fbeee6"/></svg></span></div><div class="a" style="left:0;top:10.9px;width:100%;height:18.3px;background:#fafafa;overflow:hidden"><svg style="left:0;top:0" width="52.4" height="18.3"><path d="M26.2 0 V20" stroke="#e4e4e2" stroke-width="0.6"/><text x="20.5" y="16.4" font-size="8.8" fill="#cdcdcb" font-family="Liberation Sans" letter-spacing="-0.1">scene_6_vid</text><circle cx="17" cy="2.5" r="2" fill="#f4f4f4" fill="none" stroke="#505050" stroke-width="0.6"/><path d="M17 4.5 V16.5 M15 7.5 L17 6.5 L19 8.5" stroke="#404040" stroke-width="0.8" fill="none"/><circle cx="44.39999999999998" cy="3" r="2.6" fill="#f4f4f4" fill="none" stroke="#505050" stroke-width="0.6"/><path d="M44.39999999999998 5.6 v4 M41.39999999999998 7.5 h6" fill="none" stroke="#505050" stroke-width="0.6"/><path d="M38.39999999999998 8.5 h12 v7 h-12z M40.39999999999998 8.5 v7 M47.89999999999998 8.5 v7" fill="#efefef" stroke="#8a8a8a" stroke-width="0.55"/><path d="M41.89999999999998 10 l1.2 6 M45.89999999999998 10 l-0.5 6" stroke="#666" stroke-width="0.7"/><rect x="7" y="5.2" width="10" height="10" rx="2.5" fill="#fff" fill-opacity="0.9" stroke="#d6d6d6" stroke-width="0.7"/><path d="M10.5 8.0 L14.2 10.2 L10.5 12.399999999999999z" fill="#a5a5a5"/></svg></div><div class="a" style="left:0;top:29.2px;width:100%;height:17.4px;background:#0f2b27;border:1px solid #24504a;border-top:none;border-radius:0 0 3px 3px"></div><div class="a" style="left:0;top:34.9px;width:100%;height:1.6px;background:#4ccaa9"></div><svg style="left:0;top:29.2px" width="52.4" height="17.4"><path d="M0 16.400000000000034 L0.0,14.3 L1.2,14.5 L2.4,15.3 L3.7,14.4 L4.9,14.2 L6.1,14.7 L7.3,15.1 L8.5,14.8 L9.7,15.3 L11.0,15.5 L12.2,14.2 L13.4,14.7 L14.6,14.8 L15.8,14.3 L17.1,14.9 L18.3,14.4 L19.5,14.4 L20.7,15.2 L21.9,15.2 L23.2,15.1 L24.4,15.2 L25.6,14.7 L26.8,15.2 L28.0,15.0 L29.2,15.3 L30.5,14.3 L31.7,15.1 L32.9,14.9 L34.1,14.7 L35.3,14.3 L36.6,15.0 L37.8,14.3 L39.0,14.9 L40.2,14.8 L41.4,14.8 L42.7,15.5 L43.9,14.9 L45.1,15.3 L46.3,15.5 L47.5,14.5 L48.7,15.3 L50.0,14.9 L51.2,14.6 L52.4,14.8 L52.4 16.400000000000034 Z" fill="#3aae94"/></svg></div>
<div class="a" style="left:397.4px;top:407.2px;width:60.3px;height:46.6px;border-radius:3px;overflow:hidden;background:#0e2a26"><div class="a" style="left:0;top:0;width:100%;height:10.9px;background:#d9825a"></div><div class="a" style="left:56.1px;top:3px;width:1px;height:5px;background:#3b2418"></div><div class="a" style="left:0;top:1.2px;width:47.3px;text-align:center;line-height:9px;font-size:7.5px"><span style="position:relative;font-size:7.5px;letter-spacing:-0.3px;color:#fbeee6;white-space:nowrap">Fast 1.40x<svg style="left:calc(100% + 5.6px);top:2.4px" width="6" height="5"><path d="M0.2 0.2 H5 L2.6 3.2z" fill="#fbeee6"/></svg></span></div><div class="a" style="left:0;top:10.9px;width:100%;height:18.3px;background:#fafafa;overflow:hidden"><svg style="left:0;top:0" width="60.3" height="18.3"><path d="M30.2 0 V20" stroke="#e4e4e2" stroke-width="0.6"/><text x="20.5" y="16.4" font-size="8.8" fill="#cdcdcb" font-family="Liberation Sans" letter-spacing="-0.1">scene_7_vid</text><circle cx="17" cy="2.5" r="2" fill="#f4f4f4" fill="none" stroke="#505050" stroke-width="0.6"/><path d="M17 4.5 V16.5 M15 7.5 L17 6.5 L19 8.5" stroke="#404040" stroke-width="0.8" fill="none"/><circle cx="52.30000000000001" cy="3" r="2.6" fill="#f4f4f4" fill="none" stroke="#505050" stroke-width="0.6"/><path d="M52.30000000000001 5.6 v4 M49.30000000000001 7.5 h6" fill="none" stroke="#505050" stroke-width="0.6"/><path d="M46.30000000000001 8.5 h12 v7 h-12z M48.30000000000001 8.5 v7 M55.80000000000001 8.5 v7" fill="#efefef" stroke="#8a8a8a" stroke-width="0.55"/><path d="M49.80000000000001 10 l1.2 6 M53.80000000000001 10 l-0.5 6" stroke="#666" stroke-width="0.7"/><rect x="7" y="5.2" width="10" height="10" rx="2.5" fill="#fff" fill-opacity="0.9" stroke="#d6d6d6" stroke-width="0.7"/><path d="M10.5 8.0 L14.2 10.2 L10.5 12.399999999999999z" fill="#a5a5a5"/></svg></div><div class="a" style="left:0;top:29.2px;width:100%;height:17.4px;background:#0f2b27;border:1px solid #24504a;border-top:none;border-radius:0 0 3px 3px"></div><div class="a" style="left:0;top:34.9px;width:100%;height:1.6px;background:#4ccaa9"></div><svg style="left:0;top:29.2px" width="60.3" height="17.4"><path d="M0 16.400000000000034 L0.0,15.9 L1.2,15.8 L2.4,15.8 L3.6,15.7 L4.8,16.0 L6.0,15.8 L7.2,16.0 L8.4,15.3 L9.6,13.9 L10.9,13.0 L12.1,13.0 L13.3,13.8 L14.5,15.2 L15.7,15.9 L16.9,15.8 L18.1,15.8 L19.3,15.8 L20.5,15.7 L21.7,15.9 L22.9,15.8 L24.1,15.9 L25.3,15.6 L26.5,15.7 L27.7,15.7 L28.9,15.6 L30.2,16.0 L31.4,15.8 L32.6,15.6 L33.8,15.7 L35.0,16.0 L36.2,16.0 L37.4,15.9 L38.6,16.0 L39.8,16.0 L41.0,16.0 L42.2,15.8 L43.4,15.7 L44.6,15.6 L45.8,16.0 L47.0,15.7 L48.2,15.8 L49.4,16.0 L50.7,15.7 L51.9,15.6 L53.1,16.0 L54.3,15.6 L55.5,15.9 L56.7,15.8 L57.9,15.6 L59.1,15.7 L60.3,16.0 L60.3 16.400000000000034 Z" fill="#3aae94"/></svg></div>
<div class="a" style="left:458.9px;top:407.2px;width:56.1px;height:46.6px;border-radius:3px;overflow:hidden;background:#0e2a26"><div class="a" style="left:0;top:0;width:100%;height:10.9px;background:#d9825a"></div><div class="a" style="left:51.9px;top:3px;width:1px;height:5px;background:#3b2418"></div><div class="a" style="left:0;top:1.2px;width:43.1px;text-align:center;line-height:9px;font-size:7.5px"><span style="position:relative;font-size:7.5px;letter-spacing:-0.3px;color:#fbeee6;white-space:nowrap">Fast 1.50x<svg style="left:calc(100% + 5.6px);top:2.4px" width="6" height="5"><path d="M0.2 0.2 H5 L2.6 3.2z" fill="#fbeee6"/></svg></span></div><div class="a" style="left:0;top:10.9px;width:100%;height:18.3px;background:#fafafa;overflow:hidden"><svg style="left:0;top:0" width="56.1" height="18.3"><path d="M28.1 0 V20" stroke="#e4e4e2" stroke-width="0.6"/><text x="20.5" y="16.4" font-size="8.8" fill="#cdcdcb" font-family="Liberation Sans" letter-spacing="-0.1">scene_8_vid</text><circle cx="17" cy="2.5" r="2" fill="#f4f4f4" fill="none" stroke="#505050" stroke-width="0.6"/><path d="M17 4.5 V16.5 M15 7.5 L17 6.5 L19 8.5" stroke="#404040" stroke-width="0.8" fill="none"/><circle cx="48.10000000000002" cy="3" r="2.6" fill="#f4f4f4" fill="none" stroke="#505050" stroke-width="0.6"/><path d="M48.10000000000002 5.6 v4 M45.10000000000002 7.5 h6" fill="none" stroke="#505050" stroke-width="0.6"/><path d="M42.10000000000002 8.5 h12 v7 h-12z M44.10000000000002 8.5 v7 M51.60000000000002 8.5 v7" fill="#efefef" stroke="#8a8a8a" stroke-width="0.55"/><path d="M45.60000000000002 10 l1.2 6 M49.60000000000002 10 l-0.5 6" stroke="#666" stroke-width="0.7"/><rect x="7" y="5.2" width="10" height="10" rx="2.5" fill="#fff" fill-opacity="0.9" stroke="#d6d6d6" stroke-width="0.7"/><path d="M10.5 8.0 L14.2 10.2 L10.5 12.399999999999999z" fill="#a5a5a5"/></svg></div><div class="a" style="left:0;top:29.2px;width:100%;height:17.4px;background:#0f2b27;border:1px solid #24504a;border-top:none;border-radius:0 0 3px 3px"></div><div class="a" style="left:0;top:34.9px;width:100%;height:1.6px;background:#4ccaa9"></div><svg style="left:0;top:29.2px" width="56.1" height="17.4"><path d="M0 16.400000000000034 L0.0,15.9 L1.2,15.8 L2.4,15.9 L3.7,16.0 L4.9,15.9 L6.1,15.7 L7.3,16.1 L8.5,15.8 L9.8,15.9 L11.0,16.1 L12.2,15.9 L13.4,15.8 L14.6,15.8 L15.9,16.0 L17.1,15.6 L18.3,15.7 L19.5,15.6 L20.7,16.0 L22.0,16.0 L23.2,16.1 L24.4,15.7 L25.6,16.0 L26.8,16.0 L28.1,15.9 L29.3,15.6 L30.5,15.7 L31.7,16.0 L32.9,16.0 L34.1,15.6 L35.4,15.8 L36.6,15.7 L37.8,16.0 L39.0,16.1 L40.2,15.7 L41.5,15.9 L42.7,16.0 L43.9,15.6 L45.1,15.8 L46.3,15.7 L47.6,16.0 L48.8,15.7 L50.0,16.0 L51.2,15.7 L52.4,15.9 L53.7,15.9 L54.9,15.8 L56.1,15.6 L56.1 16.400000000000034 Z" fill="#3aae94"/></svg></div>
<div class="a" style="left:516.2px;top:407.2px;width:60.6px;height:46.6px;border-radius:3px;overflow:hidden;background:#0e2a26"><div class="a" style="left:0;top:0;width:100%;height:10.9px;background:#d9825a"></div><div class="a" style="left:56.4px;top:3px;width:1px;height:5px;background:#3b2418"></div><div class="a" style="left:0;top:1.2px;width:47.6px;text-align:center;line-height:9px;font-size:7.5px"><span style="position:relative;font-size:7.5px;letter-spacing:-0.3px;color:#fbeee6;white-space:nowrap">Fast 1.40x<svg style="left:calc(100% + 5.6px);top:2.4px" width="6" height="5"><path d="M0.2 0.2 H5 L2.6 3.2z" fill="#fbeee6"/></svg></span></div><div class="a" style="left:0;top:10.9px;width:100%;height:18.3px;background:#fafafa;overflow:hidden"><svg style="left:0;top:0" width="60.6" height="18.3"><path d="M30.3 0 V20" stroke="#e4e4e2" stroke-width="0.6"/><text x="20.5" y="16.4" font-size="8.8" fill="#cdcdcb" font-family="Liberation Sans" letter-spacing="-0.1">scene_9_vid</text><circle cx="17" cy="2.5" r="2" fill="#f4f4f4" fill="none" stroke="#505050" stroke-width="0.6"/><path d="M17 4.5 V16.5 M15 7.5 L17 6.5 L19 8.5" stroke="#404040" stroke-width="0.8" fill="none"/><circle cx="52.59999999999991" cy="3" r="2.6" fill="#f4f4f4" fill="none" stroke="#505050" stroke-width="0.6"/><path d="M52.59999999999991 5.6 v4 M49.59999999999991 7.5 h6" fill="none" stroke="#505050" stroke-width="0.6"/><path d="M46.59999999999991 8.5 h12 v7 h-12z M48.59999999999991 8.5 v7 M56.09999999999991 8.5 v7" fill="#efefef" stroke="#8a8a8a" stroke-width="0.55"/><path d="M50.09999999999991 10 l1.2 6 M54.09999999999991 10 l-0.5 6" stroke="#666" stroke-width="0.7"/><rect x="7" y="5.2" width="10" height="10" rx="2.5" fill="#fff" fill-opacity="0.9" stroke="#d6d6d6" stroke-width="0.7"/><path d="M10.5 8.0 L14.2 10.2 L10.5 12.399999999999999z" fill="#a5a5a5"/></svg></div><div class="a" style="left:0;top:29.2px;width:100%;height:17.4px;background:#0f2b27;border:1px solid #24504a;border-top:none;border-radius:0 0 3px 3px"></div><div class="a" style="left:0;top:34.9px;width:100%;height:1.6px;background:#4ccaa9"></div><svg style="left:0;top:29.2px" width="60.6" height="17.4"><path d="M0 16.400000000000034 L0.0,16.0 L1.2,16.0 L2.4,15.8 L3.6,16.0 L4.8,16.0 L6.1,16.0 L7.3,16.1 L8.5,16.0 L9.7,15.9 L10.9,15.9 L12.1,15.7 L13.3,15.9 L14.5,15.8 L15.8,16.0 L17.0,15.9 L18.2,16.1 L19.4,16.0 L20.6,16.1 L21.8,15.7 L23.0,15.8 L24.2,16.0 L25.5,15.9 L26.7,15.6 L27.9,16.0 L29.1,15.7 L30.3,15.9 L31.5,15.8 L32.7,15.7 L33.9,15.9 L35.1,15.8 L36.4,15.7 L37.6,15.6 L38.8,15.9 L40.0,15.7 L41.2,15.7 L42.4,15.8 L43.6,15.9 L44.8,15.9 L46.1,16.1 L47.3,16.0 L48.5,16.0 L49.7,15.7 L50.9,16.0 L52.1,16.0 L53.3,16.0 L54.5,15.7 L55.8,15.7 L57.0,15.8 L58.2,15.9 L59.4,16.0 L60.6,15.9 L60.6 16.400000000000034 Z" fill="#3aae94"/></svg><div class="a" style="left:0;top:0;width:100%;height:100%;border:1.8px solid #e9ecec;border-radius:4px;box-shadow:inset 0 0 0 0.8px #0e1a18"></div></div>
<div class="a" style="left:578.2px;top:407.2px;width:85.2px;height:46.6px;border-radius:3px;overflow:hidden;background:#0e2a26"><div class="a" style="left:0;top:0.0px;width:100%;height:29.2px;background:#f7f7f5;overflow:hidden"><svg style="left:0;top:0" width="85.2" height="29.2"><rect x="5.7" y="5" width="10.5" height="10.5" rx="2.5" fill="#fff" fill-opacity="0.9" stroke="#d6d6d6" stroke-width="0.7"/><path d="M9.375 7.94 L13.26 10.25 L9.375 12.559999999999999z" fill="#a5a5a5"/><text x="34.5" y="16.3" font-size="8.5" fill="#c4c4c2" font-family="Liberation Sans" letter-spacing="-0.2">ne_10_vid</text><path d="M50.1 0 V30" stroke="#e2e2e0" stroke-width="0.6"/><circle cx="26.5" cy="6.7" r="2.6" fill="#f4f4f4" fill="none" stroke="#505050" stroke-width="0.6"/><path d="M26.5 9.3 v4 M23.5 11.2 h6" fill="none" stroke="#505050" stroke-width="0.6"/><path d="M19.0 12.2 h15 v8.5 h-15z M21.0 12.2 v8.5 M31.5 12.2 v8.5" fill="#efefef" stroke="#8a8a8a" stroke-width="0.55"/><path d="M24.0 13.7 l1.2 6 M28.0 13.7 l-0.5 6" stroke="#666" stroke-width="0.7"/><circle cx="78.2" cy="7.5" r="2.6" fill="#f4f4f4" fill="none" stroke="#505050" stroke-width="0.6"/><path d="M78.2 10.1 v4 M75.2 12.0 h6" fill="none" stroke="#505050" stroke-width="0.6"/><path d="M70.7 13.0 h15 v8.5 h-15z M72.7 13.0 v8.5 M83.2 13.0 v8.5" fill="#efefef" stroke="#8a8a8a" stroke-width="0.55"/><path d="M75.7 14.5 l1.2 6 M79.7 14.5 l-0.5 6" stroke="#666" stroke-width="0.7"/></svg></div><div class="a" style="left:0;top:29.2px;width:100%;height:17.4px;background:#0f2b27;border:1px solid #24504a;border-top:none;border-radius:0 0 3px 3px"></div><div class="a" style="left:0;top:34.9px;width:100%;height:1.6px;background:#4ccaa9"></div><svg style="left:0;top:29.2px" width="85.2" height="17.4"><path d="M0 16.400000000000034 L0.0,14.5 L1.2,15.0 L2.4,14.5 L3.7,14.8 L4.9,13.7 L6.1,13.6 L7.3,14.4 L8.5,14.9 L9.7,13.7 L11.0,14.8 L12.2,14.7 L13.4,15.3 L14.6,14.6 L15.8,14.5 L17.0,14.4 L18.3,14.9 L19.5,14.4 L20.7,15.3 L21.9,14.8 L23.1,15.1 L24.3,14.6 L25.6,15.2 L26.8,15.2 L28.0,14.8 L29.2,14.9 L30.4,14.3 L31.6,14.4 L32.9,14.0 L34.1,14.2 L35.3,14.1 L36.5,13.8 L37.7,14.6 L38.9,14.7 L40.2,13.6 L41.4,15.0 L42.6,14.1 L43.8,14.2 L45.0,15.2 L46.3,13.9 L47.5,13.8 L48.7,14.2 L49.9,14.0 L51.1,13.9 L52.3,15.0 L53.6,14.4 L54.8,14.4 L56.0,13.9 L57.2,13.9 L58.4,13.9 L59.6,14.3 L60.9,13.8 L62.1,14.1 L63.3,14.1 L64.5,14.9 L65.7,15.2 L66.9,15.1 L68.2,14.7 L69.4,15.1 L70.6,13.9 L71.8,14.3 L73.0,14.2 L74.2,14.2 L75.5,14.1 L76.7,14.5 L77.9,15.3 L79.1,13.9 L80.3,14.0 L81.5,14.4 L82.8,14.4 L84.0,14.2 L85.2,15.2 L85.2 16.400000000000034 Z" fill="#3aae94"/></svg></div>
<div class="a" style="left:77.5px;top:457.4px;width:581.2px;height:28.2px;background:#0f332e;border-radius:3px;overflow:hidden;border:1px solid #1f4a43"><svg style="left:-1px;top:-1px" width="581.2" height="28.2"><defs><clipPath id="wfc"><path d="M0 28.200000000000045 L0.00 28.20 L0.35 28.20 L0.70 26.84 L1.05 26.84 L1.40 22.30 L1.75 22.30 L2.10 21.03 L2.45 21.03 L2.80 17.20 L3.15 17.20 L3.50 20.14 L3.85 20.14 L4.20 22.45 L4.55 22.45 L4.90 19.14 L5.25 19.14 L5.60 20.16 L5.95 20.16 L6.30 23.33 L6.65 23.33 L7.00 19.88 L7.35 19.88 L7.70 21.95 L8.05 21.95 L8.40 21.78 L8.75 21.78 L9.10 19.88 L9.45 19.88 L9.80 20.82 L10.15 20.82 L10.50 22.65 L10.85 22.65 L11.20 22.18 L11.55 22.18 L11.90 21.11 L12.25 21.11 L12.60 19.52 L12.95 19.52 L13.30 21.40 L13.65 21.40 L14.00 20.94 L14.35 20.94 L14.70 22.32 L15.05 22.32 L15.40 19.54 L15.75 19.54 L16.10 23.90 L16.45 23.90 L16.80 28.20 L17.15 28.20 L17.50 28.20 L17.85 28.20 L18.20 28.20 L18.55 28.20 L18.90 28.20 L19.25 28.20 L19.60 28.20 L19.95 28.20 L20.30 28.20 L20.65 28.20 L21.00 28.20 L21.35 28.20 L21.70 28.20 L22.05 28.20 L22.40 28.20 L22.75 28.20 L23.10 28.20 L23.45 28.20 L23.80 28.20 L24.15 28.20 L24.50 28.20 L24.85 28.20 L25.20 28.20 L25.55 28.20 L25.90 28.20 L26.25 28.20 L26.60 28.20 L26.95 28.20 L27.30 28.20 L27.65 28.20 L28.00 28.20 L28.35 28.20 L28.70 26.65 L29.05 26.65 L29.40 22.71 L29.75 22.71 L30.10 20.68 L30.45 20.68 L30.80 20.09 L31.15 20.09 L31.50 23.93 L31.85 23.93 L32.20 20.65 L32.55 20.65 L32.90 16.54 L33.25 16.54 L33.60 18.76 L33.95 18.76 L34.30 19.84 L34.65 19.84 L35.00 18.27 L35.35 18.27 L35.70 19.96 L36.05 19.96 L36.40 20.00 L36.75 20.00 L37.10 17.94 L37.45 17.94 L37.80 20.54 L38.15 20.54 L38.50 13.63 L38.85 13.63 L39.20 20.24 L39.55 20.24 L39.90 13.98 L40.25 13.98 L40.60 11.49 L40.95 11.49 L41.30 15.62 L41.65 15.62 L42.00 19.95 L42.35 19.95 L42.70 20.74 L43.05 20.74 L43.40 23.73 L43.75 23.73 L44.10 19.03 L44.45 19.03 L44.80 16.07 L45.15 16.07 L45.50 18.68 L45.85 18.68 L46.20 11.13 L46.55 11.13 L46.90 17.00 L47.25 17.00 L47.60 13.05 L47.95 13.05 L48.30 15.24 L48.65 15.24 L49.00 23.91 L49.35 23.91 L49.70 28.20 L50.05 28.20 L50.40 28.20 L50.75 28.20 L51.10 28.20 L51.45 28.20 L51.80 28.20 L52.15 28.20 L52.50 28.20 L52.85 28.20 L53.20 28.20 L53.55 28.20 L53.90 28.20 L54.25 28.20 L54.60 28.20 L54.95 28.20 L55.30 28.20 L55.65 28.20 L56.00 28.20 L56.35 28.20 L56.70 28.20 L57.05 28.20 L57.40 28.20 L57.75 28.20 L58.10 28.20 L58.45 28.20 L58.80 28.20 L59.15 28.20 L59.50 24.72 L59.85 24.72 L60.20 17.13 L60.55 17.13 L60.90 13.20 L61.25 13.20 L61.60 11.64 L61.95 11.64 L62.30 18.06 L62.65 18.06 L63.00 11.53 L63.35 11.53 L63.70 9.89 L64.05 9.89 L64.40 2.00 L64.75 2.00 L65.10 4.26 L65.45 4.26 L65.80 11.65 L66.15 11.65 L66.50 16.30 L66.85 16.30 L67.20 9.40 L67.55 9.40 L67.90 10.62 L68.25 10.62 L68.60 9.02 L68.95 9.02 L69.30 14.00 L69.65 14.00 L70.00 15.07 L70.35 15.07 L70.70 2.46 L71.05 2.46 L71.40 7.71 L71.75 7.71 L72.10 4.60 L72.45 4.60 L72.80 8.69 L73.15 8.69 L73.50 11.17 L73.85 11.17 L74.20 8.74 L74.55 8.74 L74.90 7.19 L75.25 7.19 L75.60 12.61 L75.95 12.61 L76.30 11.72 L76.65 11.72 L77.00 8.67 L77.35 8.67 L77.70 12.07 L78.05 12.07 L78.40 9.15 L78.75 9.15 L79.10 12.48 L79.45 12.48 L79.80 11.12 L80.15 11.12 L80.50 11.89 L80.85 11.89 L81.20 10.94 L81.55 10.94 L81.90 2.00 L82.25 2.00 L82.60 13.18 L82.95 13.18 L83.30 8.25 L83.65 8.25 L84.00 6.80 L84.35 6.80 L84.70 7.24 L85.05 7.24 L85.40 14.06 L85.75 14.06 L86.10 8.20 L86.45 8.20 L86.80 11.52 L87.15 11.52 L87.50 2.00 L87.85 2.00 L88.20 16.82 L88.55 16.82 L88.90 13.93 L89.25 13.93 L89.60 18.82 L89.95 18.82 L90.30 25.12 L90.65 25.12 L91.00 28.20 L91.35 28.20 L91.70 28.20 L92.05 28.20 L92.40 28.20 L92.75 28.20 L93.10 28.20 L93.45 28.20 L93.80 28.20 L94.15 28.20 L94.50 28.20 L94.85 28.20 L95.20 28.20 L95.55 28.20 L95.90 28.20 L96.25 28.20 L96.60 28.20 L96.95 28.20 L97.30 28.20 L97.65 28.20 L98.00 28.20 L98.35 28.20 L98.70 28.20 L99.05 28.20 L99.40 28.20 L99.75 28.20 L100.10 28.20 L100.45 28.20 L100.80 28.20 L101.15 28.20 L101.50 28.20 L101.85 28.20 L102.20 28.20 L102.55 28.20 L102.90 26.80 L103.25 26.80 L103.60 23.18 L103.95 23.18 L104.30 18.76 L104.65 18.76 L105.00 16.22 L105.35 16.22 L105.70 16.30 L106.05 16.30 L106.40 15.64 L106.75 15.64 L107.10 18.72 L107.45 18.72 L107.80 19.59 L108.15 19.59 L108.50 20.03 L108.85 20.03 L109.20 17.88 L109.55 17.88 L109.90 16.70 L110.25 16.70 L110.60 17.26 L110.95 17.26 L111.30 17.58 L111.65 17.58 L112.00 20.05 L112.35 20.05 L112.70 17.05 L113.05 17.05 L113.40 18.40 L113.75 18.40 L114.10 20.18 L114.45 20.18 L114.80 14.48 L115.15 14.48 L115.50 12.29 L115.85 12.29 L116.20 14.65 L116.55 14.65 L116.90 11.33 L117.25 11.33 L117.60 10.23 L117.95 10.23 L118.30 18.63 L118.65 18.63 L119.00 12.39 L119.35 12.39 L119.70 14.10 L120.05 14.10 L120.40 14.66 L120.75 14.66 L121.10 17.07 L121.45 17.07 L121.80 8.94 L122.15 8.94 L122.50 13.42 L122.85 13.42 L123.20 8.34 L123.55 8.34 L123.90 13.51 L124.25 13.51 L124.60 8.62 L124.95 8.62 L125.30 11.56 L125.65 11.56 L126.00 6.20 L126.35 6.20 L126.70 14.15 L127.05 14.15 L127.40 18.73 L127.75 18.73 L128.10 15.90 L128.45 15.90 L128.80 17.15 L129.15 17.15 L129.50 23.04 L129.85 23.04 L130.20 25.56 L130.55 25.56 L130.90 28.20 L131.25 28.20 L131.60 28.20 L131.95 28.20 L132.30 28.20 L132.65 28.20 L133.00 28.20 L133.35 28.20 L133.70 28.20 L134.05 28.20 L134.40 28.20 L134.75 28.20 L135.10 28.20 L135.45 28.20 L135.80 28.20 L136.15 28.20 L136.50 28.20 L136.85 28.20 L137.20 28.20 L137.55 28.20 L137.90 28.20 L138.25 28.20 L138.60 28.20 L138.95 28.20 L139.30 28.20 L139.65 28.20 L140.00 28.20 L140.35 28.20 L140.70 28.20 L141.05 28.20 L141.40 28.20 L141.75 28.20 L142.10 28.20 L142.45 28.20 L142.80 25.24 L143.15 25.24 L143.50 16.36 L143.85 16.36 L144.20 17.29 L144.55 17.29 L144.90 18.40 L145.25 18.40 L145.60 18.14 L145.95 18.14 L146.30 18.01 L146.65 18.01 L147.00 16.88 L147.35 16.88 L147.70 17.08 L148.05 17.08 L148.40 16.99 L148.75 16.99 L149.10 20.70 L149.45 20.70 L149.80 15.30 L150.15 15.30 L150.50 17.03 L150.85 17.03 L151.20 17.87 L151.55 17.87 L151.90 18.42 L152.25 18.42 L152.60 10.59 L152.95 10.59 L153.30 12.20 L153.65 12.20 L154.00 9.22 L154.35 9.22 L154.70 8.30 L155.05 8.30 L155.40 9.77 L155.75 9.77 L156.10 8.38 L156.45 8.38 L156.80 19.15 L157.15 19.15 L157.50 23.24 L157.85 23.24 L158.20 24.75 L158.55 24.75 L158.90 28.20 L159.25 28.20 L159.60 28.20 L159.95 28.20 L160.30 28.20 L160.65 28.20 L161.00 28.20 L161.35 28.20 L161.70 28.20 L162.05 28.20 L162.40 28.20 L162.75 28.20 L163.10 28.20 L163.45 28.20 L163.80 28.20 L164.15 28.20 L164.50 28.20 L164.85 28.20 L165.20 28.20 L165.55 28.20 L165.90 28.20 L166.25 28.20 L166.60 28.20 L166.95 28.20 L167.30 28.20 L167.65 28.20 L168.00 28.20 L168.35 28.20 L168.70 28.20 L169.05 28.20 L169.40 28.20 L169.75 28.20 L170.10 28.20 L170.45 28.20 L170.80 28.20 L171.15 28.20 L171.50 28.20 L171.85 28.20 L172.20 20.34 L172.55 20.34 L172.90 22.27 L173.25 22.27 L173.60 17.48 L173.95 17.48 L174.30 15.43 L174.65 15.43 L175.00 19.27 L175.35 19.27 L175.70 15.52 L176.05 15.52 L176.40 10.92 L176.75 10.92 L177.10 20.60 L177.45 20.60 L177.80 17.61 L178.15 17.61 L178.50 14.39 L178.85 14.39 L179.20 12.19 L179.55 12.19 L179.90 11.01 L180.25 11.01 L180.60 14.68 L180.95 14.68 L181.30 9.08 L181.65 9.08 L182.00 5.93 L182.35 5.93 L182.70 16.71 L183.05 16.71 L183.40 15.62 L183.75 15.62 L184.10 14.99 L184.45 14.99 L184.80 15.00 L185.15 15.00 L185.50 9.91 L185.85 9.91 L186.20 9.59 L186.55 9.59 L186.90 9.09 L187.25 9.09 L187.60 12.23 L187.95 12.23 L188.30 17.81 L188.65 17.81 L189.00 19.08 L189.35 19.08 L189.70 18.62 L190.05 18.62 L190.40 14.90 L190.75 14.90 L191.10 20.71 L191.45 20.71 L191.80 22.62 L192.15 22.62 L192.50 28.20 L192.85 28.20 L193.20 28.20 L193.55 28.20 L193.90 28.20 L194.25 28.20 L194.60 28.20 L194.95 28.20 L195.30 28.20 L195.65 28.20 L196.00 28.20 L196.35 28.20 L196.70 28.20 L197.05 28.20 L197.40 28.20 L197.75 28.20 L198.10 28.20 L198.45 28.20 L198.80 28.20 L199.15 28.20 L199.50 28.20 L199.85 28.20 L200.20 28.20 L200.55 28.20 L200.90 28.20 L201.25 28.20 L201.60 28.20 L201.95 28.20 L202.30 28.20 L202.65 28.20 L203.00 28.20 L203.35 28.20 L203.70 28.20 L204.05 28.20 L204.40 28.20 L204.75 28.20 L205.10 28.20 L205.45 28.20 L205.80 28.20 L206.15 28.20 L206.50 20.35 L206.85 20.35 L207.20 12.88 L207.55 12.88 L207.90 10.14 L208.25 10.14 L208.60 5.25 L208.95 5.25 L209.30 10.10 L209.65 10.10 L210.00 12.76 L210.35 12.76 L210.70 9.11 L211.05 9.11 L211.40 7.15 L211.75 7.15 L212.10 8.91 L212.45 8.91 L212.80 10.16 L213.15 10.16 L213.50 19.18 L213.85 19.18 L214.20 14.05 L214.55 14.05 L214.90 16.46 L215.25 16.46 L215.60 16.51 L215.95 16.51 L216.30 16.21 L216.65 16.21 L217.00 16.33 L217.35 16.33 L217.70 17.39 L218.05 17.39 L218.40 17.01 L218.75 17.01 L219.10 18.71 L219.45 18.71 L219.80 15.74 L220.15 15.74 L220.50 17.31 L220.85 17.31 L221.20 16.60 L221.55 16.60 L221.90 17.80 L222.25 17.80 L222.60 17.09 L222.95 17.09 L223.30 16.08 L223.65 16.08 L224.00 21.52 L224.35 21.52 L224.70 15.47 L225.05 15.47 L225.40 19.46 L225.75 19.46 L226.10 21.79 L226.45 21.79 L226.80 24.06 L227.15 24.06 L227.50 28.20 L227.85 28.20 L228.20 28.20 L228.55 28.20 L228.90 28.20 L229.25 28.20 L229.60 28.20 L229.95 28.20 L230.30 28.20 L230.65 28.20 L231.00 28.20 L231.35 28.20 L231.70 28.20 L232.05 28.20 L232.40 28.20 L232.75 28.20 L233.10 28.20 L233.45 28.20 L233.80 28.20 L234.15 28.20 L234.50 28.20 L234.85 28.20 L235.20 28.20 L235.55 28.20 L235.90 28.20 L236.25 28.20 L236.60 28.20 L236.95 28.20 L237.30 28.20 L237.65 28.20 L238.00 28.20 L238.35 28.20 L238.70 28.20 L239.05 28.20 L239.40 25.06 L239.75 25.06 L240.10 20.41 L240.45 20.41 L240.80 12.09 L241.15 12.09 L241.50 5.73 L241.85 5.73 L242.20 16.17 L242.55 16.17 L242.90 10.38 L243.25 10.38 L243.60 3.31 L243.95 3.31 L244.30 9.57 L244.65 9.57 L245.00 8.03 L245.35 8.03 L245.70 9.56 L246.05 9.56 L246.40 8.05 L246.75 8.05 L247.10 12.76 L247.45 12.76 L247.80 11.59 L248.15 11.59 L248.50 17.19 L248.85 17.19 L249.20 15.11 L249.55 15.11 L249.90 14.10 L250.25 14.10 L250.60 7.43 L250.95 7.43 L251.30 6.94 L251.65 6.94 L252.00 6.33 L252.35 6.33 L252.70 5.98 L253.05 5.98 L253.40 10.62 L253.75 10.62 L254.10 11.63 L254.45 11.63 L254.80 17.14 L255.15 17.14 L255.50 21.42 L255.85 21.42 L256.20 18.65 L256.55 18.65 L256.90 19.74 L257.25 19.74 L257.60 15.85 L257.95 15.85 L258.30 20.99 L258.65 20.99 L259.00 26.74 L259.35 26.74 L259.70 28.20 L260.05 28.20 L260.40 28.20 L260.75 28.20 L261.10 28.20 L261.45 28.20 L261.80 28.20 L262.15 28.20 L262.50 28.20 L262.85 28.20 L263.20 28.20 L263.55 28.20 L263.90 28.20 L264.25 28.20 L264.60 28.20 L264.95 28.20 L265.30 28.20 L265.65 28.20 L266.00 28.20 L266.35 28.20 L266.70 28.20 L267.05 28.20 L267.40 28.20 L267.75 28.20 L268.10 28.20 L268.45 28.20 L268.80 28.20 L269.15 28.20 L269.50 28.20 L269.85 28.20 L270.20 28.20 L270.55 28.20 L270.90 28.20 L271.25 28.20 L271.60 28.20 L271.95 28.20 L272.30 28.20 L272.65 28.20 L273.00 28.20 L273.35 28.20 L273.70 28.20 L274.05 28.20 L274.40 28.20 L274.75 28.20 L275.10 28.20 L275.45 28.20 L275.80 23.25 L276.15 23.25 L276.50 20.26 L276.85 20.26 L277.20 20.26 L277.55 20.26 L277.90 12.93 L278.25 12.93 L278.60 14.79 L278.95 14.79 L279.30 15.83 L279.65 15.83 L280.00 9.38 L280.35 9.38 L280.70 12.42 L281.05 12.42 L281.40 16.13 L281.75 16.13 L282.10 16.96 L282.45 16.96 L282.80 15.91 L283.15 15.91 L283.50 11.97 L283.85 11.97 L284.20 14.42 L284.55 14.42 L284.90 16.32 L285.25 16.32 L285.60 18.48 L285.95 18.48 L286.30 20.04 L286.65 20.04 L287.00 13.52 L287.35 13.52 L287.70 13.75 L288.05 13.75 L288.40 14.22 L288.75 14.22 L289.10 5.14 L289.45 5.14 L289.80 11.87 L290.15 11.87 L290.50 9.33 L290.85 9.33 L291.20 14.46 L291.55 14.46 L291.90 12.84 L292.25 12.84 L292.60 18.79 L292.95 18.79 L293.30 17.29 L293.65 17.29 L294.00 22.55 L294.35 22.55 L294.70 15.57 L295.05 15.57 L295.40 18.58 L295.75 18.58 L296.10 11.78 L296.45 11.78 L296.80 18.39 L297.15 18.39 L297.50 20.09 L297.85 20.09 L298.20 21.37 L298.55 21.37 L298.90 17.64 L299.25 17.64 L299.60 17.62 L299.95 17.62 L300.30 17.09 L300.65 17.09 L301.00 17.63 L301.35 17.63 L301.70 15.58 L302.05 15.58 L302.40 15.29 L302.75 15.29 L303.10 5.14 L303.45 5.14 L303.80 5.68 L304.15 5.68 L304.50 7.27 L304.85 7.27 L305.20 14.50 L305.55 14.50 L305.90 22.38 L306.25 22.38 L306.60 16.64 L306.95 16.64 L307.30 21.82 L307.65 21.82 L308.00 26.84 L308.35 26.84 L308.70 28.20 L309.05 28.20 L309.40 28.20 L309.75 28.20 L310.10 28.20 L310.45 28.20 L310.80 28.20 L311.15 28.20 L311.50 28.20 L311.85 28.20 L312.20 28.20 L312.55 28.20 L312.90 28.20 L313.25 28.20 L313.60 28.20 L313.95 28.20 L314.30 28.20 L314.65 28.20 L315.00 28.20 L315.35 28.20 L315.70 28.20 L316.05 28.20 L316.40 28.20 L316.75 28.20 L317.10 28.20 L317.45 28.20 L317.80 28.20 L318.15 28.20 L318.50 28.20 L318.85 28.20 L319.20 26.62 L319.55 26.62 L319.90 23.70 L320.25 23.70 L320.60 23.07 L320.95 23.07 L321.30 8.84 L321.65 8.84 L322.00 13.98 L322.35 13.98 L322.70 14.81 L323.05 14.81 L323.40 3.83 L323.75 3.83 L324.10 3.83 L324.45 3.83 L324.80 12.40 L325.15 12.40 L325.50 15.53 L325.85 15.53 L326.20 15.43 L326.55 15.43 L326.90 19.28 L327.25 19.28 L327.60 16.54 L327.95 16.54 L328.30 16.77 L328.65 16.77 L329.00 15.24 L329.35 15.24 L329.70 12.62 L330.05 12.62 L330.40 15.60 L330.75 15.60 L331.10 15.26 L331.45 15.26 L331.80 18.94 L332.15 18.94 L332.50 22.59 L332.85 22.59 L333.20 17.45 L333.55 17.45 L333.90 13.34 L334.25 13.34 L334.60 20.51 L334.95 20.51 L335.30 6.22 L335.65 6.22 L336.00 3.87 L336.35 3.87 L336.70 14.63 L337.05 14.63 L337.40 9.19 L337.75 9.19 L338.10 15.78 L338.45 15.78 L338.80 10.40 L339.15 10.40 L339.50 13.90 L339.85 13.90 L340.20 11.89 L340.55 11.89 L340.90 12.59 L341.25 12.59 L341.60 10.78 L341.95 10.78 L342.30 9.72 L342.65 9.72 L343.00 9.44 L343.35 9.44 L343.70 12.14 L344.05 12.14 L344.40 6.72 L344.75 6.72 L345.10 17.84 L345.45 17.84 L345.80 21.98 L346.15 21.98 L346.50 28.20 L346.85 28.20 L347.20 28.20 L347.55 28.20 L347.90 28.20 L348.25 28.20 L348.60 28.20 L348.95 28.20 L349.30 28.20 L349.65 28.20 L350.00 28.20 L350.35 28.20 L350.70 28.20 L351.05 28.20 L351.40 28.20 L351.75 28.20 L352.10 28.20 L352.45 28.20 L352.80 28.20 L353.15 28.20 L353.50 28.20 L353.85 28.20 L354.20 28.20 L354.55 28.20 L354.90 28.20 L355.25 28.20 L355.60 28.20 L355.95 28.20 L356.30 28.20 L356.65 28.20 L357.00 28.20 L357.35 28.20 L357.70 28.20 L358.05 28.20 L358.40 28.20 L358.75 28.20 L359.10 28.20 L359.45 28.20 L359.80 28.20 L360.15 28.20 L360.50 28.20 L360.85 28.20 L361.20 28.20 L361.55 28.20 L361.90 22.40 L362.25 22.40 L362.60 16.26 L362.95 16.26 L363.30 18.36 L363.65 18.36 L364.00 21.86 L364.35 21.86 L364.70 19.52 L365.05 19.52 L365.40 18.00 L365.75 18.00 L366.10 19.59 L366.45 19.59 L366.80 19.78 L367.15 19.78 L367.50 20.57 L367.85 20.57 L368.20 21.14 L368.55 21.14 L368.90 20.29 L369.25 20.29 L369.60 23.49 L369.95 23.49 L370.30 15.70 L370.65 15.70 L371.00 17.63 L371.35 17.63 L371.70 14.45 L372.05 14.45 L372.40 17.46 L372.75 17.46 L373.10 26.38 L373.45 26.38 L373.80 28.20 L374.15 28.20 L374.50 28.20 L374.85 28.20 L375.20 28.20 L375.55 28.20 L375.90 28.20 L376.25 28.20 L376.60 28.20 L376.95 28.20 L377.30 28.20 L377.65 28.20 L378.00 28.20 L378.35 28.20 L378.70 28.20 L379.05 28.20 L379.40 28.20 L379.75 28.20 L380.10 28.20 L380.45 28.20 L380.80 28.20 L381.15 28.20 L381.50 28.20 L381.85 28.20 L382.20 28.20 L382.55 28.20 L382.90 28.20 L383.25 28.20 L383.60 28.20 L383.95 28.20 L384.30 28.20 L384.65 28.20 L385.00 28.20 L385.35 28.20 L385.70 28.20 L386.05 28.20 L386.40 28.20 L386.75 28.20 L387.10 27.40 L387.45 27.40 L387.80 23.62 L388.15 23.62 L388.50 19.04 L388.85 19.04 L389.20 18.39 L389.55 18.39 L389.90 13.85 L390.25 13.85 L390.60 6.86 L390.95 6.86 L391.30 8.01 L391.65 8.01 L392.00 4.09 L392.35 4.09 L392.70 7.87 L393.05 7.87 L393.40 10.32 L393.75 10.32 L394.10 16.19 L394.45 16.19 L394.80 10.06 L395.15 10.06 L395.50 3.65 L395.85 3.65 L396.20 3.35 L396.55 3.35 L396.90 11.15 L397.25 11.15 L397.60 7.92 L397.95 7.92 L398.30 5.01 L398.65 5.01 L399.00 11.89 L399.35 11.89 L399.70 11.56 L400.05 11.56 L400.40 9.43 L400.75 9.43 L401.10 12.86 L401.45 12.86 L401.80 14.59 L402.15 14.59 L402.50 8.22 L402.85 8.22 L403.20 11.28 L403.55 11.28 L403.90 7.33 L404.25 7.33 L404.60 9.08 L404.95 9.08 L405.30 13.99 L405.65 13.99 L406.00 10.81 L406.35 10.81 L406.70 11.43 L407.05 11.43 L407.40 17.55 L407.75 17.55 L408.10 21.89 L408.45 21.89 L408.80 12.32 L409.15 12.32 L409.50 9.41 L409.85 9.41 L410.20 10.31 L410.55 10.31 L410.90 9.53 L411.25 9.53 L411.60 10.47 L411.95 10.47 L412.30 12.15 L412.65 12.15 L413.00 10.47 L413.35 10.47 L413.70 7.05 L414.05 7.05 L414.40 14.16 L414.75 14.16 L415.10 19.07 L415.45 19.07 L415.80 18.72 L416.15 18.72 L416.50 16.26 L416.85 16.26 L417.20 17.72 L417.55 17.72 L417.90 17.41 L418.25 17.41 L418.60 17.88 L418.95 17.88 L419.30 15.04 L419.65 15.04 L420.00 15.71 L420.35 15.71 L420.70 15.03 L421.05 15.03 L421.40 16.55 L421.75 16.55 L422.10 17.04 L422.45 17.04 L422.80 15.38 L423.15 15.38 L423.50 13.61 L423.85 13.61 L424.20 14.44 L424.55 14.44 L424.90 13.63 L425.25 13.63 L425.60 17.59 L425.95 17.59 L426.30 15.98 L426.65 15.98 L427.00 9.20 L427.35 9.20 L427.70 17.23 L428.05 17.23 L428.40 15.99 L428.75 15.99 L429.10 17.00 L429.45 17.00 L429.80 21.91 L430.15 21.91 L430.50 21.45 L430.85 21.45 L431.20 26.45 L431.55 26.45 L431.90 26.94 L432.25 26.94 L432.60 28.20 L432.95 28.20 L433.30 28.20 L433.65 28.20 L434.00 28.20 L434.35 28.20 L434.70 28.20 L435.05 28.20 L435.40 28.20 L435.75 28.20 L436.10 28.20 L436.45 28.20 L436.80 28.20 L437.15 28.20 L437.50 28.20 L437.85 28.20 L438.20 28.20 L438.55 28.20 L438.90 28.20 L439.25 28.20 L439.60 28.20 L439.95 28.20 L440.30 28.20 L440.65 28.20 L441.00 28.20 L441.35 28.20 L441.70 28.20 L442.05 28.20 L442.40 28.20 L442.75 28.20 L443.10 28.20 L443.45 28.20 L443.80 28.20 L444.15 28.20 L444.50 28.20 L444.85 28.20 L445.20 28.20 L445.55 28.20 L445.90 28.20 L446.25 28.20 L446.60 28.20 L446.95 28.20 L447.30 28.20 L447.65 28.20 L448.00 28.20 L448.35 28.20 L448.70 26.44 L449.05 26.44 L449.40 15.57 L449.75 15.57 L450.10 8.59 L450.45 8.59 L450.80 13.37 L451.15 13.37 L451.50 20.55 L451.85 20.55 L452.20 8.79 L452.55 8.79 L452.90 10.13 L453.25 10.13 L453.60 15.50 L453.95 15.50 L454.30 18.11 L454.65 18.11 L455.00 19.27 L455.35 19.27 L455.70 15.65 L456.05 15.65 L456.40 17.13 L456.75 17.13 L457.10 15.72 L457.45 15.72 L457.80 16.54 L458.15 16.54 L458.50 19.79 L458.85 19.79 L459.20 19.82 L459.55 19.82 L459.90 20.56 L460.25 20.56 L460.60 22.56 L460.95 22.56 L461.30 9.17 L461.65 9.17 L462.00 10.93 L462.35 10.93 L462.70 22.89 L463.05 22.89 L463.40 26.25 L463.75 26.25 L464.10 28.20 L464.45 28.20 L464.80 28.20 L465.15 28.20 L465.50 28.20 L465.85 28.20 L466.20 28.20 L466.55 28.20 L466.90 28.20 L467.25 28.20 L467.60 28.20 L467.95 28.20 L468.30 28.20 L468.65 28.20 L469.00 28.20 L469.35 28.20 L469.70 28.20 L470.05 28.20 L470.40 28.20 L470.75 28.20 L471.10 28.20 L471.45 28.20 L471.80 28.20 L472.15 28.20 L472.50 28.20 L472.85 28.20 L473.20 28.20 L473.55 28.20 L473.90 28.20 L474.25 28.20 L474.60 28.20 L474.95 28.20 L475.30 28.20 L475.65 28.20 L476.00 28.20 L476.35 28.20 L476.70 28.20 L477.05 28.20 L477.40 28.20 L477.75 28.20 L478.10 28.20 L478.45 28.20 L478.80 28.20 L479.15 28.20 L479.50 25.11 L479.85 25.11 L480.20 16.50 L480.55 16.50 L480.90 10.41 L481.25 10.41 L481.60 22.04 L481.95 22.04 L482.30 16.70 L482.65 16.70 L483.00 19.71 L483.35 19.71 L483.70 18.72 L484.05 18.72 L484.40 14.37 L484.75 14.37 L485.10 14.30 L485.45 14.30 L485.80 10.58 L486.15 10.58 L486.50 14.69 L486.85 14.69 L487.20 18.71 L487.55 18.71 L487.90 10.30 L488.25 10.30 L488.60 19.32 L488.95 19.32 L489.30 12.14 L489.65 12.14 L490.00 13.06 L490.35 13.06 L490.70 9.34 L491.05 9.34 L491.40 9.34 L491.75 9.34 L492.10 13.25 L492.45 13.25 L492.80 14.08 L493.15 14.08 L493.50 12.58 L493.85 12.58 L494.20 18.78 L494.55 18.78 L494.90 23.40 L495.25 23.40 L495.60 28.20 L495.95 28.20 L496.30 28.20 L496.65 28.20 L497.00 28.20 L497.35 28.20 L497.70 28.20 L498.05 28.20 L498.40 28.20 L498.75 28.20 L499.10 28.20 L499.45 28.20 L499.80 28.20 L500.15 28.20 L500.50 28.20 L500.85 28.20 L501.20 28.20 L501.55 28.20 L501.90 28.20 L502.25 28.20 L502.60 28.20 L502.95 28.20 L503.30 28.20 L503.65 28.20 L504.00 28.20 L504.35 28.20 L504.70 28.20 L505.05 28.20 L505.40 28.20 L505.75 28.20 L506.10 28.20 L506.45 28.20 L506.80 28.20 L507.15 28.20 L507.50 28.20 L507.85 28.20 L508.20 28.20 L508.55 28.20 L508.90 28.20 L509.25 28.20 L509.60 28.20 L509.95 28.20 L510.30 28.20 L510.65 28.20 L511.00 28.20 L511.35 28.20 L511.70 28.20 L512.05 28.20 L512.40 28.20 L512.75 28.20 L513.10 27.15 L513.45 27.15 L513.80 22.81 L514.15 22.81 L514.50 17.59 L514.85 17.59 L515.20 16.04 L515.55 16.04 L515.90 10.17 L516.25 10.17 L516.60 10.91 L516.95 10.91 L517.30 12.23 L517.65 12.23 L518.00 16.53 L518.35 16.53 L518.70 17.75 L519.05 17.75 L519.40 14.49 L519.75 14.49 L520.10 15.06 L520.45 15.06 L520.80 12.16 L521.15 12.16 L521.50 9.35 L521.85 9.35 L522.20 15.96 L522.55 15.96 L522.90 5.14 L523.25 5.14 L523.60 7.95 L523.95 7.95 L524.30 9.84 L524.65 9.84 L525.00 14.79 L525.35 14.79 L525.70 5.14 L526.05 5.14 L526.40 10.96 L526.75 10.96 L527.10 15.69 L527.45 15.69 L527.80 21.59 L528.15 21.59 L528.50 17.10 L528.85 17.10 L529.20 19.08 L529.55 19.08 L529.90 5.62 L530.25 5.62 L530.60 8.95 L530.95 8.95 L531.30 11.81 L531.65 11.81 L532.00 5.68 L532.35 5.68 L532.70 7.43 L533.05 7.43 L533.40 18.39 L533.75 18.39 L534.10 13.48 L534.45 13.48 L534.80 15.06 L535.15 15.06 L535.50 19.07 L535.85 19.07 L536.20 16.42 L536.55 16.42 L536.90 20.75 L537.25 20.75 L537.60 22.03 L537.95 22.03 L538.30 27.07 L538.65 27.07 L539.00 28.20 L539.35 28.20 L539.70 28.20 L540.05 28.20 L540.40 28.20 L540.75 28.20 L541.10 28.20 L541.45 28.20 L541.80 28.20 L542.15 28.20 L542.50 28.20 L542.85 28.20 L543.20 28.20 L543.55 28.20 L543.90 28.20 L544.25 28.20 L544.60 28.20 L544.95 28.20 L545.30 28.20 L545.65 28.20 L546.00 28.20 L546.35 28.20 L546.70 28.20 L547.05 28.20 L547.40 28.20 L547.75 28.20 L548.10 28.20 L548.45 28.20 L548.80 28.20 L549.15 28.20 L549.50 28.20 L549.85 28.20 L550.20 28.20 L550.55 28.20 L550.90 28.20 L551.25 28.20 L551.60 28.20 L551.95 28.20 L552.30 28.20 L552.65 28.20 L553.00 24.03 L553.35 24.03 L553.70 20.68 L554.05 20.68 L554.40 19.77 L554.75 19.77 L555.10 14.48 L555.45 14.48 L555.80 13.71 L556.15 13.71 L556.50 22.89 L556.85 22.89 L557.20 15.99 L557.55 15.99 L557.90 13.89 L558.25 13.89 L558.60 9.45 L558.95 9.45 L559.30 11.91 L559.65 11.91 L560.00 12.67 L560.35 12.67 L560.70 17.74 L561.05 17.74 L561.40 16.05 L561.75 16.05 L562.10 16.91 L562.45 16.91 L562.80 16.61 L563.15 16.61 L563.50 17.82 L563.85 17.82 L564.20 18.05 L564.55 18.05 L564.90 15.57 L565.25 15.57 L565.60 23.80 L565.95 23.80 L566.30 17.65 L566.65 17.65 L567.00 19.62 L567.35 19.62 L567.70 13.09 L568.05 13.09 L568.40 13.91 L568.75 13.91 L569.10 16.40 L569.45 16.40 L569.80 22.04 L570.15 22.04 L570.50 20.35 L570.85 20.35 L571.20 13.36 L571.55 13.36 L571.90 13.78 L572.25 13.78 L572.60 14.21 L572.95 14.21 L573.30 12.62 L573.65 12.62 L574.00 13.28 L574.35 13.28 L574.70 10.50 L575.05 10.50 L575.40 15.07 L575.75 15.07 L576.10 18.33 L576.45 18.33 L576.80 24.35 L577.15 24.35 L577.50 28.20 L577.85 28.20 L578.20 28.20 L578.55 28.20 L578.90 28.20 L579.25 28.20 L579.60 28.20 L579.95 28.20 L580.30 28.20 L580.65 28.20 L581.00 28.20 L581.35 28.20 L581.20 28.200000000000045 Z"/></clipPath></defs><path d="M0 28.200000000000045 L0.00 28.20 L0.35 28.20 L0.70 26.84 L1.05 26.84 L1.40 22.30 L1.75 22.30 L2.10 21.03 L2.45 21.03 L2.80 17.20 L3.15 17.20 L3.50 20.14 L3.85 20.14 L4.20 22.45 L4.55 22.45 L4.90 19.14 L5.25 19.14 L5.60 20.16 L5.95 20.16 L6.30 23.33 L6.65 23.33 L7.00 19.88 L7.35 19.88 L7.70 21.95 L8.05 21.95 L8.40 21.78 L8.75 21.78 L9.10 19.88 L9.45 19.88 L9.80 20.82 L10.15 20.82 L10.50 22.65 L10.85 22.65 L11.20 22.18 L11.55 22.18 L11.90 21.11 L12.25 21.11 L12.60 19.52 L12.95 19.52 L13.30 21.40 L13.65 21.40 L14.00 20.94 L14.35 20.94 L14.70 22.32 L15.05 22.32 L15.40 19.54 L15.75 19.54 L16.10 23.90 L16.45 23.90 L16.80 28.20 L17.15 28.20 L17.50 28.20 L17.85 28.20 L18.20 28.20 L18.55 28.20 L18.90 28.20 L19.25 28.20 L19.60 28.20 L19.95 28.20 L20.30 28.20 L20.65 28.20 L21.00 28.20 L21.35 28.20 L21.70 28.20 L22.05 28.20 L22.40 28.20 L22.75 28.20 L23.10 28.20 L23.45 28.20 L23.80 28.20 L24.15 28.20 L24.50 28.20 L24.85 28.20 L25.20 28.20 L25.55 28.20 L25.90 28.20 L26.25 28.20 L26.60 28.20 L26.95 28.20 L27.30 28.20 L27.65 28.20 L28.00 28.20 L28.35 28.20 L28.70 26.65 L29.05 26.65 L29.40 22.71 L29.75 22.71 L30.10 20.68 L30.45 20.68 L30.80 20.09 L31.15 20.09 L31.50 23.93 L31.85 23.93 L32.20 20.65 L32.55 20.65 L32.90 16.54 L33.25 16.54 L33.60 18.76 L33.95 18.76 L34.30 19.84 L34.65 19.84 L35.00 18.27 L35.35 18.27 L35.70 19.96 L36.05 19.96 L36.40 20.00 L36.75 20.00 L37.10 17.94 L37.45 17.94 L37.80 20.54 L38.15 20.54 L38.50 13.63 L38.85 13.63 L39.20 20.24 L39.55 20.24 L39.90 13.98 L40.25 13.98 L40.60 11.49 L40.95 11.49 L41.30 15.62 L41.65 15.62 L42.00 19.95 L42.35 19.95 L42.70 20.74 L43.05 20.74 L43.40 23.73 L43.75 23.73 L44.10 19.03 L44.45 19.03 L44.80 16.07 L45.15 16.07 L45.50 18.68 L45.85 18.68 L46.20 11.13 L46.55 11.13 L46.90 17.00 L47.25 17.00 L47.60 13.05 L47.95 13.05 L48.30 15.24 L48.65 15.24 L49.00 23.91 L49.35 23.91 L49.70 28.20 L50.05 28.20 L50.40 28.20 L50.75 28.20 L51.10 28.20 L51.45 28.20 L51.80 28.20 L52.15 28.20 L52.50 28.20 L52.85 28.20 L53.20 28.20 L53.55 28.20 L53.90 28.20 L54.25 28.20 L54.60 28.20 L54.95 28.20 L55.30 28.20 L55.65 28.20 L56.00 28.20 L56.35 28.20 L56.70 28.20 L57.05 28.20 L57.40 28.20 L57.75 28.20 L58.10 28.20 L58.45 28.20 L58.80 28.20 L59.15 28.20 L59.50 24.72 L59.85 24.72 L60.20 17.13 L60.55 17.13 L60.90 13.20 L61.25 13.20 L61.60 11.64 L61.95 11.64 L62.30 18.06 L62.65 18.06 L63.00 11.53 L63.35 11.53 L63.70 9.89 L64.05 9.89 L64.40 2.00 L64.75 2.00 L65.10 4.26 L65.45 4.26 L65.80 11.65 L66.15 11.65 L66.50 16.30 L66.85 16.30 L67.20 9.40 L67.55 9.40 L67.90 10.62 L68.25 10.62 L68.60 9.02 L68.95 9.02 L69.30 14.00 L69.65 14.00 L70.00 15.07 L70.35 15.07 L70.70 2.46 L71.05 2.46 L71.40 7.71 L71.75 7.71 L72.10 4.60 L72.45 4.60 L72.80 8.69 L73.15 8.69 L73.50 11.17 L73.85 11.17 L74.20 8.74 L74.55 8.74 L74.90 7.19 L75.25 7.19 L75.60 12.61 L75.95 12.61 L76.30 11.72 L76.65 11.72 L77.00 8.67 L77.35 8.67 L77.70 12.07 L78.05 12.07 L78.40 9.15 L78.75 9.15 L79.10 12.48 L79.45 12.48 L79.80 11.12 L80.15 11.12 L80.50 11.89 L80.85 11.89 L81.20 10.94 L81.55 10.94 L81.90 2.00 L82.25 2.00 L82.60 13.18 L82.95 13.18 L83.30 8.25 L83.65 8.25 L84.00 6.80 L84.35 6.80 L84.70 7.24 L85.05 7.24 L85.40 14.06 L85.75 14.06 L86.10 8.20 L86.45 8.20 L86.80 11.52 L87.15 11.52 L87.50 2.00 L87.85 2.00 L88.20 16.82 L88.55 16.82 L88.90 13.93 L89.25 13.93 L89.60 18.82 L89.95 18.82 L90.30 25.12 L90.65 25.12 L91.00 28.20 L91.35 28.20 L91.70 28.20 L92.05 28.20 L92.40 28.20 L92.75 28.20 L93.10 28.20 L93.45 28.20 L93.80 28.20 L94.15 28.20 L94.50 28.20 L94.85 28.20 L95.20 28.20 L95.55 28.20 L95.90 28.20 L96.25 28.20 L96.60 28.20 L96.95 28.20 L97.30 28.20 L97.65 28.20 L98.00 28.20 L98.35 28.20 L98.70 28.20 L99.05 28.20 L99.40 28.20 L99.75 28.20 L100.10 28.20 L100.45 28.20 L100.80 28.20 L101.15 28.20 L101.50 28.20 L101.85 28.20 L102.20 28.20 L102.55 28.20 L102.90 26.80 L103.25 26.80 L103.60 23.18 L103.95 23.18 L104.30 18.76 L104.65 18.76 L105.00 16.22 L105.35 16.22 L105.70 16.30 L106.05 16.30 L106.40 15.64 L106.75 15.64 L107.10 18.72 L107.45 18.72 L107.80 19.59 L108.15 19.59 L108.50 20.03 L108.85 20.03 L109.20 17.88 L109.55 17.88 L109.90 16.70 L110.25 16.70 L110.60 17.26 L110.95 17.26 L111.30 17.58 L111.65 17.58 L112.00 20.05 L112.35 20.05 L112.70 17.05 L113.05 17.05 L113.40 18.40 L113.75 18.40 L114.10 20.18 L114.45 20.18 L114.80 14.48 L115.15 14.48 L115.50 12.29 L115.85 12.29 L116.20 14.65 L116.55 14.65 L116.90 11.33 L117.25 11.33 L117.60 10.23 L117.95 10.23 L118.30 18.63 L118.65 18.63 L119.00 12.39 L119.35 12.39 L119.70 14.10 L120.05 14.10 L120.40 14.66 L120.75 14.66 L121.10 17.07 L121.45 17.07 L121.80 8.94 L122.15 8.94 L122.50 13.42 L122.85 13.42 L123.20 8.34 L123.55 8.34 L123.90 13.51 L124.25 13.51 L124.60 8.62 L124.95 8.62 L125.30 11.56 L125.65 11.56 L126.00 6.20 L126.35 6.20 L126.70 14.15 L127.05 14.15 L127.40 18.73 L127.75 18.73 L128.10 15.90 L128.45 15.90 L128.80 17.15 L129.15 17.15 L129.50 23.04 L129.85 23.04 L130.20 25.56 L130.55 25.56 L130.90 28.20 L131.25 28.20 L131.60 28.20 L131.95 28.20 L132.30 28.20 L132.65 28.20 L133.00 28.20 L133.35 28.20 L133.70 28.20 L134.05 28.20 L134.40 28.20 L134.75 28.20 L135.10 28.20 L135.45 28.20 L135.80 28.20 L136.15 28.20 L136.50 28.20 L136.85 28.20 L137.20 28.20 L137.55 28.20 L137.90 28.20 L138.25 28.20 L138.60 28.20 L138.95 28.20 L139.30 28.20 L139.65 28.20 L140.00 28.20 L140.35 28.20 L140.70 28.20 L141.05 28.20 L141.40 28.20 L141.75 28.20 L142.10 28.20 L142.45 28.20 L142.80 25.24 L143.15 25.24 L143.50 16.36 L143.85 16.36 L144.20 17.29 L144.55 17.29 L144.90 18.40 L145.25 18.40 L145.60 18.14 L145.95 18.14 L146.30 18.01 L146.65 18.01 L147.00 16.88 L147.35 16.88 L147.70 17.08 L148.05 17.08 L148.40 16.99 L148.75 16.99 L149.10 20.70 L149.45 20.70 L149.80 15.30 L150.15 15.30 L150.50 17.03 L150.85 17.03 L151.20 17.87 L151.55 17.87 L151.90 18.42 L152.25 18.42 L152.60 10.59 L152.95 10.59 L153.30 12.20 L153.65 12.20 L154.00 9.22 L154.35 9.22 L154.70 8.30 L155.05 8.30 L155.40 9.77 L155.75 9.77 L156.10 8.38 L156.45 8.38 L156.80 19.15 L157.15 19.15 L157.50 23.24 L157.85 23.24 L158.20 24.75 L158.55 24.75 L158.90 28.20 L159.25 28.20 L159.60 28.20 L159.95 28.20 L160.30 28.20 L160.65 28.20 L161.00 28.20 L161.35 28.20 L161.70 28.20 L162.05 28.20 L162.40 28.20 L162.75 28.20 L163.10 28.20 L163.45 28.20 L163.80 28.20 L164.15 28.20 L164.50 28.20 L164.85 28.20 L165.20 28.20 L165.55 28.20 L165.90 28.20 L166.25 28.20 L166.60 28.20 L166.95 28.20 L167.30 28.20 L167.65 28.20 L168.00 28.20 L168.35 28.20 L168.70 28.20 L169.05 28.20 L169.40 28.20 L169.75 28.20 L170.10 28.20 L170.45 28.20 L170.80 28.20 L171.15 28.20 L171.50 28.20 L171.85 28.20 L172.20 20.34 L172.55 20.34 L172.90 22.27 L173.25 22.27 L173.60 17.48 L173.95 17.48 L174.30 15.43 L174.65 15.43 L175.00 19.27 L175.35 19.27 L175.70 15.52 L176.05 15.52 L176.40 10.92 L176.75 10.92 L177.10 20.60 L177.45 20.60 L177.80 17.61 L178.15 17.61 L178.50 14.39 L178.85 14.39 L179.20 12.19 L179.55 12.19 L179.90 11.01 L180.25 11.01 L180.60 14.68 L180.95 14.68 L181.30 9.08 L181.65 9.08 L182.00 5.93 L182.35 5.93 L182.70 16.71 L183.05 16.71 L183.40 15.62 L183.75 15.62 L184.10 14.99 L184.45 14.99 L184.80 15.00 L185.15 15.00 L185.50 9.91 L185.85 9.91 L186.20 9.59 L186.55 9.59 L186.90 9.09 L187.25 9.09 L187.60 12.23 L187.95 12.23 L188.30 17.81 L188.65 17.81 L189.00 19.08 L189.35 19.08 L189.70 18.62 L190.05 18.62 L190.40 14.90 L190.75 14.90 L191.10 20.71 L191.45 20.71 L191.80 22.62 L192.15 22.62 L192.50 28.20 L192.85 28.20 L193.20 28.20 L193.55 28.20 L193.90 28.20 L194.25 28.20 L194.60 28.20 L194.95 28.20 L195.30 28.20 L195.65 28.20 L196.00 28.20 L196.35 28.20 L196.70 28.20 L197.05 28.20 L197.40 28.20 L197.75 28.20 L198.10 28.20 L198.45 28.20 L198.80 28.20 L199.15 28.20 L199.50 28.20 L199.85 28.20 L200.20 28.20 L200.55 28.20 L200.90 28.20 L201.25 28.20 L201.60 28.20 L201.95 28.20 L202.30 28.20 L202.65 28.20 L203.00 28.20 L203.35 28.20 L203.70 28.20 L204.05 28.20 L204.40 28.20 L204.75 28.20 L205.10 28.20 L205.45 28.20 L205.80 28.20 L206.15 28.20 L206.50 20.35 L206.85 20.35 L207.20 12.88 L207.55 12.88 L207.90 10.14 L208.25 10.14 L208.60 5.25 L208.95 5.25 L209.30 10.10 L209.65 10.10 L210.00 12.76 L210.35 12.76 L210.70 9.11 L211.05 9.11 L211.40 7.15 L211.75 7.15 L212.10 8.91 L212.45 8.91 L212.80 10.16 L213.15 10.16 L213.50 19.18 L213.85 19.18 L214.20 14.05 L214.55 14.05 L214.90 16.46 L215.25 16.46 L215.60 16.51 L215.95 16.51 L216.30 16.21 L216.65 16.21 L217.00 16.33 L217.35 16.33 L217.70 17.39 L218.05 17.39 L218.40 17.01 L218.75 17.01 L219.10 18.71 L219.45 18.71 L219.80 15.74 L220.15 15.74 L220.50 17.31 L220.85 17.31 L221.20 16.60 L221.55 16.60 L221.90 17.80 L222.25 17.80 L222.60 17.09 L222.95 17.09 L223.30 16.08 L223.65 16.08 L224.00 21.52 L224.35 21.52 L224.70 15.47 L225.05 15.47 L225.40 19.46 L225.75 19.46 L226.10 21.79 L226.45 21.79 L226.80 24.06 L227.15 24.06 L227.50 28.20 L227.85 28.20 L228.20 28.20 L228.55 28.20 L228.90 28.20 L229.25 28.20 L229.60 28.20 L229.95 28.20 L230.30 28.20 L230.65 28.20 L231.00 28.20 L231.35 28.20 L231.70 28.20 L232.05 28.20 L232.40 28.20 L232.75 28.20 L233.10 28.20 L233.45 28.20 L233.80 28.20 L234.15 28.20 L234.50 28.20 L234.85 28.20 L235.20 28.20 L235.55 28.20 L235.90 28.20 L236.25 28.20 L236.60 28.20 L236.95 28.20 L237.30 28.20 L237.65 28.20 L238.00 28.20 L238.35 28.20 L238.70 28.20 L239.05 28.20 L239.40 25.06 L239.75 25.06 L240.10 20.41 L240.45 20.41 L240.80 12.09 L241.15 12.09 L241.50 5.73 L241.85 5.73 L242.20 16.17 L242.55 16.17 L242.90 10.38 L243.25 10.38 L243.60 3.31 L243.95 3.31 L244.30 9.57 L244.65 9.57 L245.00 8.03 L245.35 8.03 L245.70 9.56 L246.05 9.56 L246.40 8.05 L246.75 8.05 L247.10 12.76 L247.45 12.76 L247.80 11.59 L248.15 11.59 L248.50 17.19 L248.85 17.19 L249.20 15.11 L249.55 15.11 L249.90 14.10 L250.25 14.10 L250.60 7.43 L250.95 7.43 L251.30 6.94 L251.65 6.94 L252.00 6.33 L252.35 6.33 L252.70 5.98 L253.05 5.98 L253.40 10.62 L253.75 10.62 L254.10 11.63 L254.45 11.63 L254.80 17.14 L255.15 17.14 L255.50 21.42 L255.85 21.42 L256.20 18.65 L256.55 18.65 L256.90 19.74 L257.25 19.74 L257.60 15.85 L257.95 15.85 L258.30 20.99 L258.65 20.99 L259.00 26.74 L259.35 26.74 L259.70 28.20 L260.05 28.20 L260.40 28.20 L260.75 28.20 L261.10 28.20 L261.45 28.20 L261.80 28.20 L262.15 28.20 L262.50 28.20 L262.85 28.20 L263.20 28.20 L263.55 28.20 L263.90 28.20 L264.25 28.20 L264.60 28.20 L264.95 28.20 L265.30 28.20 L265.65 28.20 L266.00 28.20 L266.35 28.20 L266.70 28.20 L267.05 28.20 L267.40 28.20 L267.75 28.20 L268.10 28.20 L268.45 28.20 L268.80 28.20 L269.15 28.20 L269.50 28.20 L269.85 28.20 L270.20 28.20 L270.55 28.20 L270.90 28.20 L271.25 28.20 L271.60 28.20 L271.95 28.20 L272.30 28.20 L272.65 28.20 L273.00 28.20 L273.35 28.20 L273.70 28.20 L274.05 28.20 L274.40 28.20 L274.75 28.20 L275.10 28.20 L275.45 28.20 L275.80 23.25 L276.15 23.25 L276.50 20.26 L276.85 20.26 L277.20 20.26 L277.55 20.26 L277.90 12.93 L278.25 12.93 L278.60 14.79 L278.95 14.79 L279.30 15.83 L279.65 15.83 L280.00 9.38 L280.35 9.38 L280.70 12.42 L281.05 12.42 L281.40 16.13 L281.75 16.13 L282.10 16.96 L282.45 16.96 L282.80 15.91 L283.15 15.91 L283.50 11.97 L283.85 11.97 L284.20 14.42 L284.55 14.42 L284.90 16.32 L285.25 16.32 L285.60 18.48 L285.95 18.48 L286.30 20.04 L286.65 20.04 L287.00 13.52 L287.35 13.52 L287.70 13.75 L288.05 13.75 L288.40 14.22 L288.75 14.22 L289.10 5.14 L289.45 5.14 L289.80 11.87 L290.15 11.87 L290.50 9.33 L290.85 9.33 L291.20 14.46 L291.55 14.46 L291.90 12.84 L292.25 12.84 L292.60 18.79 L292.95 18.79 L293.30 17.29 L293.65 17.29 L294.00 22.55 L294.35 22.55 L294.70 15.57 L295.05 15.57 L295.40 18.58 L295.75 18.58 L296.10 11.78 L296.45 11.78 L296.80 18.39 L297.15 18.39 L297.50 20.09 L297.85 20.09 L298.20 21.37 L298.55 21.37 L298.90 17.64 L299.25 17.64 L299.60 17.62 L299.95 17.62 L300.30 17.09 L300.65 17.09 L301.00 17.63 L301.35 17.63 L301.70 15.58 L302.05 15.58 L302.40 15.29 L302.75 15.29 L303.10 5.14 L303.45 5.14 L303.80 5.68 L304.15 5.68 L304.50 7.27 L304.85 7.27 L305.20 14.50 L305.55 14.50 L305.90 22.38 L306.25 22.38 L306.60 16.64 L306.95 16.64 L307.30 21.82 L307.65 21.82 L308.00 26.84 L308.35 26.84 L308.70 28.20 L309.05 28.20 L309.40 28.20 L309.75 28.20 L310.10 28.20 L310.45 28.20 L310.80 28.20 L311.15 28.20 L311.50 28.20 L311.85 28.20 L312.20 28.20 L312.55 28.20 L312.90 28.20 L313.25 28.20 L313.60 28.20 L313.95 28.20 L314.30 28.20 L314.65 28.20 L315.00 28.20 L315.35 28.20 L315.70 28.20 L316.05 28.20 L316.40 28.20 L316.75 28.20 L317.10 28.20 L317.45 28.20 L317.80 28.20 L318.15 28.20 L318.50 28.20 L318.85 28.20 L319.20 26.62 L319.55 26.62 L319.90 23.70 L320.25 23.70 L320.60 23.07 L320.95 23.07 L321.30 8.84 L321.65 8.84 L322.00 13.98 L322.35 13.98 L322.70 14.81 L323.05 14.81 L323.40 3.83 L323.75 3.83 L324.10 3.83 L324.45 3.83 L324.80 12.40 L325.15 12.40 L325.50 15.53 L325.85 15.53 L326.20 15.43 L326.55 15.43 L326.90 19.28 L327.25 19.28 L327.60 16.54 L327.95 16.54 L328.30 16.77 L328.65 16.77 L329.00 15.24 L329.35 15.24 L329.70 12.62 L330.05 12.62 L330.40 15.60 L330.75 15.60 L331.10 15.26 L331.45 15.26 L331.80 18.94 L332.15 18.94 L332.50 22.59 L332.85 22.59 L333.20 17.45 L333.55 17.45 L333.90 13.34 L334.25 13.34 L334.60 20.51 L334.95 20.51 L335.30 6.22 L335.65 6.22 L336.00 3.87 L336.35 3.87 L336.70 14.63 L337.05 14.63 L337.40 9.19 L337.75 9.19 L338.10 15.78 L338.45 15.78 L338.80 10.40 L339.15 10.40 L339.50 13.90 L339.85 13.90 L340.20 11.89 L340.55 11.89 L340.90 12.59 L341.25 12.59 L341.60 10.78 L341.95 10.78 L342.30 9.72 L342.65 9.72 L343.00 9.44 L343.35 9.44 L343.70 12.14 L344.05 12.14 L344.40 6.72 L344.75 6.72 L345.10 17.84 L345.45 17.84 L345.80 21.98 L346.15 21.98 L346.50 28.20 L346.85 28.20 L347.20 28.20 L347.55 28.20 L347.90 28.20 L348.25 28.20 L348.60 28.20 L348.95 28.20 L349.30 28.20 L349.65 28.20 L350.00 28.20 L350.35 28.20 L350.70 28.20 L351.05 28.20 L351.40 28.20 L351.75 28.20 L352.10 28.20 L352.45 28.20 L352.80 28.20 L353.15 28.20 L353.50 28.20 L353.85 28.20 L354.20 28.20 L354.55 28.20 L354.90 28.20 L355.25 28.20 L355.60 28.20 L355.95 28.20 L356.30 28.20 L356.65 28.20 L357.00 28.20 L357.35 28.20 L357.70 28.20 L358.05 28.20 L358.40 28.20 L358.75 28.20 L359.10 28.20 L359.45 28.20 L359.80 28.20 L360.15 28.20 L360.50 28.20 L360.85 28.20 L361.20 28.20 L361.55 28.20 L361.90 22.40 L362.25 22.40 L362.60 16.26 L362.95 16.26 L363.30 18.36 L363.65 18.36 L364.00 21.86 L364.35 21.86 L364.70 19.52 L365.05 19.52 L365.40 18.00 L365.75 18.00 L366.10 19.59 L366.45 19.59 L366.80 19.78 L367.15 19.78 L367.50 20.57 L367.85 20.57 L368.20 21.14 L368.55 21.14 L368.90 20.29 L369.25 20.29 L369.60 23.49 L369.95 23.49 L370.30 15.70 L370.65 15.70 L371.00 17.63 L371.35 17.63 L371.70 14.45 L372.05 14.45 L372.40 17.46 L372.75 17.46 L373.10 26.38 L373.45 26.38 L373.80 28.20 L374.15 28.20 L374.50 28.20 L374.85 28.20 L375.20 28.20 L375.55 28.20 L375.90 28.20 L376.25 28.20 L376.60 28.20 L376.95 28.20 L377.30 28.20 L377.65 28.20 L378.00 28.20 L378.35 28.20 L378.70 28.20 L379.05 28.20 L379.40 28.20 L379.75 28.20 L380.10 28.20 L380.45 28.20 L380.80 28.20 L381.15 28.20 L381.50 28.20 L381.85 28.20 L382.20 28.20 L382.55 28.20 L382.90 28.20 L383.25 28.20 L383.60 28.20 L383.95 28.20 L384.30 28.20 L384.65 28.20 L385.00 28.20 L385.35 28.20 L385.70 28.20 L386.05 28.20 L386.40 28.20 L386.75 28.20 L387.10 27.40 L387.45 27.40 L387.80 23.62 L388.15 23.62 L388.50 19.04 L388.85 19.04 L389.20 18.39 L389.55 18.39 L389.90 13.85 L390.25 13.85 L390.60 6.86 L390.95 6.86 L391.30 8.01 L391.65 8.01 L392.00 4.09 L392.35 4.09 L392.70 7.87 L393.05 7.87 L393.40 10.32 L393.75 10.32 L394.10 16.19 L394.45 16.19 L394.80 10.06 L395.15 10.06 L395.50 3.65 L395.85 3.65 L396.20 3.35 L396.55 3.35 L396.90 11.15 L397.25 11.15 L397.60 7.92 L397.95 7.92 L398.30 5.01 L398.65 5.01 L399.00 11.89 L399.35 11.89 L399.70 11.56 L400.05 11.56 L400.40 9.43 L400.75 9.43 L401.10 12.86 L401.45 12.86 L401.80 14.59 L402.15 14.59 L402.50 8.22 L402.85 8.22 L403.20 11.28 L403.55 11.28 L403.90 7.33 L404.25 7.33 L404.60 9.08 L404.95 9.08 L405.30 13.99 L405.65 13.99 L406.00 10.81 L406.35 10.81 L406.70 11.43 L407.05 11.43 L407.40 17.55 L407.75 17.55 L408.10 21.89 L408.45 21.89 L408.80 12.32 L409.15 12.32 L409.50 9.41 L409.85 9.41 L410.20 10.31 L410.55 10.31 L410.90 9.53 L411.25 9.53 L411.60 10.47 L411.95 10.47 L412.30 12.15 L412.65 12.15 L413.00 10.47 L413.35 10.47 L413.70 7.05 L414.05 7.05 L414.40 14.16 L414.75 14.16 L415.10 19.07 L415.45 19.07 L415.80 18.72 L416.15 18.72 L416.50 16.26 L416.85 16.26 L417.20 17.72 L417.55 17.72 L417.90 17.41 L418.25 17.41 L418.60 17.88 L418.95 17.88 L419.30 15.04 L419.65 15.04 L420.00 15.71 L420.35 15.71 L420.70 15.03 L421.05 15.03 L421.40 16.55 L421.75 16.55 L422.10 17.04 L422.45 17.04 L422.80 15.38 L423.15 15.38 L423.50 13.61 L423.85 13.61 L424.20 14.44 L424.55 14.44 L424.90 13.63 L425.25 13.63 L425.60 17.59 L425.95 17.59 L426.30 15.98 L426.65 15.98 L427.00 9.20 L427.35 9.20 L427.70 17.23 L428.05 17.23 L428.40 15.99 L428.75 15.99 L429.10 17.00 L429.45 17.00 L429.80 21.91 L430.15 21.91 L430.50 21.45 L430.85 21.45 L431.20 26.45 L431.55 26.45 L431.90 26.94 L432.25 26.94 L432.60 28.20 L432.95 28.20 L433.30 28.20 L433.65 28.20 L434.00 28.20 L434.35 28.20 L434.70 28.20 L435.05 28.20 L435.40 28.20 L435.75 28.20 L436.10 28.20 L436.45 28.20 L436.80 28.20 L437.15 28.20 L437.50 28.20 L437.85 28.20 L438.20 28.20 L438.55 28.20 L438.90 28.20 L439.25 28.20 L439.60 28.20 L439.95 28.20 L440.30 28.20 L440.65 28.20 L441.00 28.20 L441.35 28.20 L441.70 28.20 L442.05 28.20 L442.40 28.20 L442.75 28.20 L443.10 28.20 L443.45 28.20 L443.80 28.20 L444.15 28.20 L444.50 28.20 L444.85 28.20 L445.20 28.20 L445.55 28.20 L445.90 28.20 L446.25 28.20 L446.60 28.20 L446.95 28.20 L447.30 28.20 L447.65 28.20 L448.00 28.20 L448.35 28.20 L448.70 26.44 L449.05 26.44 L449.40 15.57 L449.75 15.57 L450.10 8.59 L450.45 8.59 L450.80 13.37 L451.15 13.37 L451.50 20.55 L451.85 20.55 L452.20 8.79 L452.55 8.79 L452.90 10.13 L453.25 10.13 L453.60 15.50 L453.95 15.50 L454.30 18.11 L454.65 18.11 L455.00 19.27 L455.35 19.27 L455.70 15.65 L456.05 15.65 L456.40 17.13 L456.75 17.13 L457.10 15.72 L457.45 15.72 L457.80 16.54 L458.15 16.54 L458.50 19.79 L458.85 19.79 L459.20 19.82 L459.55 19.82 L459.90 20.56 L460.25 20.56 L460.60 22.56 L460.95 22.56 L461.30 9.17 L461.65 9.17 L462.00 10.93 L462.35 10.93 L462.70 22.89 L463.05 22.89 L463.40 26.25 L463.75 26.25 L464.10 28.20 L464.45 28.20 L464.80 28.20 L465.15 28.20 L465.50 28.20 L465.85 28.20 L466.20 28.20 L466.55 28.20 L466.90 28.20 L467.25 28.20 L467.60 28.20 L467.95 28.20 L468.30 28.20 L468.65 28.20 L469.00 28.20 L469.35 28.20 L469.70 28.20 L470.05 28.20 L470.40 28.20 L470.75 28.20 L471.10 28.20 L471.45 28.20 L471.80 28.20 L472.15 28.20 L472.50 28.20 L472.85 28.20 L473.20 28.20 L473.55 28.20 L473.90 28.20 L474.25 28.20 L474.60 28.20 L474.95 28.20 L475.30 28.20 L475.65 28.20 L476.00 28.20 L476.35 28.20 L476.70 28.20 L477.05 28.20 L477.40 28.20 L477.75 28.20 L478.10 28.20 L478.45 28.20 L478.80 28.20 L479.15 28.20 L479.50 25.11 L479.85 25.11 L480.20 16.50 L480.55 16.50 L480.90 10.41 L481.25 10.41 L481.60 22.04 L481.95 22.04 L482.30 16.70 L482.65 16.70 L483.00 19.71 L483.35 19.71 L483.70 18.72 L484.05 18.72 L484.40 14.37 L484.75 14.37 L485.10 14.30 L485.45 14.30 L485.80 10.58 L486.15 10.58 L486.50 14.69 L486.85 14.69 L487.20 18.71 L487.55 18.71 L487.90 10.30 L488.25 10.30 L488.60 19.32 L488.95 19.32 L489.30 12.14 L489.65 12.14 L490.00 13.06 L490.35 13.06 L490.70 9.34 L491.05 9.34 L491.40 9.34 L491.75 9.34 L492.10 13.25 L492.45 13.25 L492.80 14.08 L493.15 14.08 L493.50 12.58 L493.85 12.58 L494.20 18.78 L494.55 18.78 L494.90 23.40 L495.25 23.40 L495.60 28.20 L495.95 28.20 L496.30 28.20 L496.65 28.20 L497.00 28.20 L497.35 28.20 L497.70 28.20 L498.05 28.20 L498.40 28.20 L498.75 28.20 L499.10 28.20 L499.45 28.20 L499.80 28.20 L500.15 28.20 L500.50 28.20 L500.85 28.20 L501.20 28.20 L501.55 28.20 L501.90 28.20 L502.25 28.20 L502.60 28.20 L502.95 28.20 L503.30 28.20 L503.65 28.20 L504.00 28.20 L504.35 28.20 L504.70 28.20 L505.05 28.20 L505.40 28.20 L505.75 28.20 L506.10 28.20 L506.45 28.20 L506.80 28.20 L507.15 28.20 L507.50 28.20 L507.85 28.20 L508.20 28.20 L508.55 28.20 L508.90 28.20 L509.25 28.20 L509.60 28.20 L509.95 28.20 L510.30 28.20 L510.65 28.20 L511.00 28.20 L511.35 28.20 L511.70 28.20 L512.05 28.20 L512.40 28.20 L512.75 28.20 L513.10 27.15 L513.45 27.15 L513.80 22.81 L514.15 22.81 L514.50 17.59 L514.85 17.59 L515.20 16.04 L515.55 16.04 L515.90 10.17 L516.25 10.17 L516.60 10.91 L516.95 10.91 L517.30 12.23 L517.65 12.23 L518.00 16.53 L518.35 16.53 L518.70 17.75 L519.05 17.75 L519.40 14.49 L519.75 14.49 L520.10 15.06 L520.45 15.06 L520.80 12.16 L521.15 12.16 L521.50 9.35 L521.85 9.35 L522.20 15.96 L522.55 15.96 L522.90 5.14 L523.25 5.14 L523.60 7.95 L523.95 7.95 L524.30 9.84 L524.65 9.84 L525.00 14.79 L525.35 14.79 L525.70 5.14 L526.05 5.14 L526.40 10.96 L526.75 10.96 L527.10 15.69 L527.45 15.69 L527.80 21.59 L528.15 21.59 L528.50 17.10 L528.85 17.10 L529.20 19.08 L529.55 19.08 L529.90 5.62 L530.25 5.62 L530.60 8.95 L530.95 8.95 L531.30 11.81 L531.65 11.81 L532.00 5.68 L532.35 5.68 L532.70 7.43 L533.05 7.43 L533.40 18.39 L533.75 18.39 L534.10 13.48 L534.45 13.48 L534.80 15.06 L535.15 15.06 L535.50 19.07 L535.85 19.07 L536.20 16.42 L536.55 16.42 L536.90 20.75 L537.25 20.75 L537.60 22.03 L537.95 22.03 L538.30 27.07 L538.65 27.07 L539.00 28.20 L539.35 28.20 L539.70 28.20 L540.05 28.20 L540.40 28.20 L540.75 28.20 L541.10 28.20 L541.45 28.20 L541.80 28.20 L542.15 28.20 L542.50 28.20 L542.85 28.20 L543.20 28.20 L543.55 28.20 L543.90 28.20 L544.25 28.20 L544.60 28.20 L544.95 28.20 L545.30 28.20 L545.65 28.20 L546.00 28.20 L546.35 28.20 L546.70 28.20 L547.05 28.20 L547.40 28.20 L547.75 28.20 L548.10 28.20 L548.45 28.20 L548.80 28.20 L549.15 28.20 L549.50 28.20 L549.85 28.20 L550.20 28.20 L550.55 28.20 L550.90 28.20 L551.25 28.20 L551.60 28.20 L551.95 28.20 L552.30 28.20 L552.65 28.20 L553.00 24.03 L553.35 24.03 L553.70 20.68 L554.05 20.68 L554.40 19.77 L554.75 19.77 L555.10 14.48 L555.45 14.48 L555.80 13.71 L556.15 13.71 L556.50 22.89 L556.85 22.89 L557.20 15.99 L557.55 15.99 L557.90 13.89 L558.25 13.89 L558.60 9.45 L558.95 9.45 L559.30 11.91 L559.65 11.91 L560.00 12.67 L560.35 12.67 L560.70 17.74 L561.05 17.74 L561.40 16.05 L561.75 16.05 L562.10 16.91 L562.45 16.91 L562.80 16.61 L563.15 16.61 L563.50 17.82 L563.85 17.82 L564.20 18.05 L564.55 18.05 L564.90 15.57 L565.25 15.57 L565.60 23.80 L565.95 23.80 L566.30 17.65 L566.65 17.65 L567.00 19.62 L567.35 19.62 L567.70 13.09 L568.05 13.09 L568.40 13.91 L568.75 13.91 L569.10 16.40 L569.45 16.40 L569.80 22.04 L570.15 22.04 L570.50 20.35 L570.85 20.35 L571.20 13.36 L571.55 13.36 L571.90 13.78 L572.25 13.78 L572.60 14.21 L572.95 14.21 L573.30 12.62 L573.65 12.62 L574.00 13.28 L574.35 13.28 L574.70 10.50 L575.05 10.50 L575.40 15.07 L575.75 15.07 L576.10 18.33 L576.45 18.33 L576.80 24.35 L577.15 24.35 L577.50 28.20 L577.85 28.20 L578.20 28.20 L578.55 28.20 L578.90 28.20 L579.25 28.20 L579.60 28.20 L579.95 28.20 L580.30 28.20 L580.65 28.20 L581.00 28.20 L581.35 28.20 L581.20 28.200000000000045 Z" fill="#3cb89b"/><g clip-path="url(#wfc)"><rect x="60.4" y="0" width="8" height="6.2" fill="#cfc985"/><rect x="122.0" y="0" width="8" height="10.4" fill="#cfc985"/><rect x="178.0" y="0" width="8" height="10.1" fill="#cfc985"/><rect x="204.6" y="0" width="8" height="9.4" fill="#cfc985"/><rect x="239.6" y="0" width="8" height="7.5" fill="#cfc985"/><rect x="285.1" y="0" width="8" height="9.3" fill="#cfc985"/><rect x="319.4" y="0" width="8" height="8.0" fill="#cfc985"/><rect x="392.2" y="0" width="8" height="7.5" fill="#cfc985"/><rect x="518.9" y="0" width="8" height="9.3" fill="#cfc985"/><rect x="554.6" y="0" width="8" height="13.7" fill="#cfc985"/></g></svg><div class="a" style="left:-1px;top:8.7px;width:581.2px;height:1.6px;background:#6fdcc2"></div><svg style="left:5.6px;top:5.7px" width="11" height="11"><rect x="0.5" y="0.5" width="10" height="10" rx="2" fill="#d8dcdc" fill-opacity="0.85"/><path d="M4 8 V3 L8.2 2.3 V7" fill="none" stroke="#2a3a36" stroke-width="0.9"/><circle cx="3.3" cy="8" r="1.2" fill="#2a3a36"/><circle cx="7.5" cy="7.2" r="1.2" fill="#2a3a36"/></svg><div class="t" style="left:19px;top:5.5px;font-size:8.3px;letter-spacing:-0.05px;color:rgba(235,240,240,0.7)">audio_0_edited</div></div>
<div class="a" style="left:662.9px;top:340px;width:1.8px;height:156px;background:#d9665e"></div>
<svg style="left:658.5px;top:333.3px" width="11" height="10"><path d="M1 1.8 Q1 0.5 2.3 0.5 H8.3 Q9.6 0.5 9.6 1.8 V5.5 L5.3 9 L1 5.5z" fill="#ef6a62"/></svg>
<div class="a" style="left:656px;top:381px;width:15.4px;height:24.4px;background:#ee6c60;border-radius:8px"></div>
<svg style="left:0;top:0" width="1080" height="496"><g fill="none" stroke="#fbe3dc" stroke-width="0.95"><ellipse cx="660.3" cy="395.6" rx="1.7" ry="2.8" transform="rotate(35 660.3 395.6)"/><ellipse cx="666.9" cy="395.6" rx="1.7" ry="2.8" transform="rotate(-35 666.9 395.6)"/><path d="M661.2 388.3 L665.6 394.4 M666.2 388.3 L661.8 394.4"/></g></svg>
<svg style="left:0;top:0" width="1080" height="496"><path d="M0 487.5 Q1.5 490 4.5 496 H0Z" fill="#f2f2f2"/></svg>
</div></body></html>
